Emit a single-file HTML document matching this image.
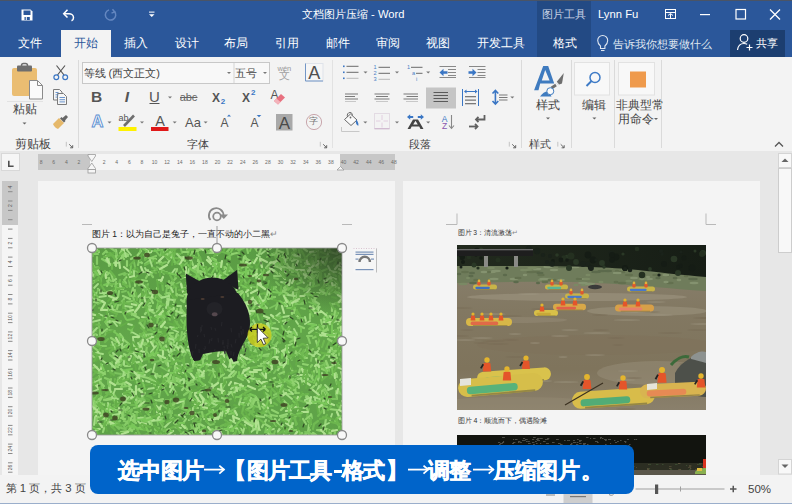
<!DOCTYPE html>
<html><head><meta charset="utf-8">
<style>
*{margin:0;padding:0;box-sizing:border-box}
html,body{width:792px;height:504px;overflow:hidden;background:#e7e7e7;font-family:"Liberation Sans",sans-serif}
.a{position:absolute}
.t{position:absolute;white-space:nowrap;line-height:1}
#title{left:0;top:0;width:792px;height:57px;background:#2b579a}
#topline{left:0;top:0;width:792px;height:1px;background:#4a5466}
#ctx{left:537px;top:1px;width:54px;height:56px;background:#234a84}
#share{left:730px;top:30px;width:55px;height:27px;background:#1c3e70}
.tab{color:#fff;font-size:11.5px;top:38px}
#seltab{left:61px;top:30px;width:50px;height:27px;background:#f3f3f3}
#ribbon{left:0;top:57px;width:792px;height:94px;background:#f3f3f3}
.sep{position:absolute;top:60px;width:1px;height:88px;background:#dadada}
.lbl{font-size:11px;color:#444;top:139px}
#doc{left:0;top:151px;width:792px;height:324px;background:#e7e7e7}
#status{left:0;top:475px;width:792px;height:28px;background:#f3f3f3}
#botline{left:0;top:503px;width:792px;height:1px;background:#9aaecb}
.page{position:absolute;top:181px;width:357px;height:294px;background:#f4f4f4}
#caption{left:90px;top:445px;width:544px;height:49px;background:#0064ca;border-radius:8px}
.cap{top:460px;color:#fff;font-size:22px;font-weight:bold;letter-spacing:-0.7px;-webkit-text-stroke:0.5px #fff}
</style></head><body>
<div id="title" class="a"></div>
<div id="topline" class="a"></div>
<div id="ctx" class="a"></div>
<div id="share" class="a"></div>
<div id="seltab" class="a"></div>
<div class="t" style="left:302px;top:9px;color:#fff;font-size:11.2px">文档图片压缩 - Word</div>
<div class="t" style="left:542px;top:9px;color:#c9d4e6;font-size:11px">图片工具</div>
<div class="t" style="left:598px;top:9px;color:#fff;font-size:11.3px">Lynn Fu</div>
<div class="t tab" style="left:18px">文件</div>
<div class="t tab" style="left:73.5px;color:#2b579a">开始</div>
<div class="t tab" style="left:124px">插入</div>
<div class="t tab" style="left:175px">设计</div>
<div class="t tab" style="left:224px">布局</div>
<div class="t tab" style="left:275px">引用</div>
<div class="t tab" style="left:326px">邮件</div>
<div class="t tab" style="left:375.5px">审阅</div>
<div class="t tab" style="left:426px">视图</div>
<div class="t tab" style="left:477px">开发工具</div>
<div class="t tab" style="left:553px">格式</div>
<div class="t" style="left:613px;top:38.5px;color:#dfe6f0;font-size:10.8px">告诉我你想要做什么</div>
<div class="t" style="left:755.5px;top:38px;color:#fff;font-size:11px">共享</div>

<div id="ribbon" class="a"></div>

<div class="sep" style="left:78px"></div>
<div class="sep" style="left:332px;background:#e2e2e2"></div>
<div class="sep" style="left:521px"></div>
<div class="sep" style="left:571px"></div>
<div class="sep" style="left:614px"></div>
<div class="sep" style="left:661px"></div>
<div class="t lbl" style="left:14.5px;font-size:11.5px;top:138.5px">剪贴板</div>
<div class="t lbl" style="left:187px">字体</div>
<div class="t lbl" style="left:409px">段落</div>
<div class="t lbl" style="left:529px">样式</div>


<svg class="a" style="left:0;top:0" width="792" height="504" viewBox="0 0 792 504">
<!-- ===== title bar icons ===== -->
<g fill="none" stroke="#fff" stroke-width="1.3">
 <path d="M21.5 9.5h9l2 2v9h-11z" fill="#fff" stroke="none"/>
 <rect x="23.5" y="10.5" width="7" height="4.5" fill="#2b579a" stroke="none"/>
 <rect x="24.5" y="17" width="1.3" height="3" fill="#2b579a" stroke="none"/>
 <rect x="26.8" y="17" width="3" height="3" fill="#2b579a" stroke="none"/>
 <path d="M67.5 9.8l-3.8 3.9l3.8 3.9" stroke-width="1.5"/><path d="M64 13.7h5c2.5 0 4.5 1.8 4.5 4c0 1.5-0.8 2.6-2 3.1" stroke-width="1.5"/>
</g>
<g fill="none" stroke="#6487c0" stroke-width="1.5">
 <path d="M114.5 11.5a5.2 5.2 0 1 1 -5.5 -1.6"/><path d="M112.5 9.3l2.2 2.6l-3.2 1.2"/>
</g>
<path d="M149 14.3h5.5l-2.75 2.8z" fill="#fff"/>
<rect x="149" y="11.6" width="5.5" height="1" fill="#fff"/>
<!-- ribbon display options -->
<g fill="none" stroke="#fff" stroke-width="1">
 <rect x="665.5" y="9.5" width="10" height="9"/>
 <path d="M665.5 12.5h10M670.5 14v4M668 15.5l2.5-2l2.5 2"/>
</g>
<rect x="700" y="14" width="10" height="1.2" fill="#fff"/>
<rect x="736" y="9.5" width="9.5" height="9.5" fill="none" stroke="#fff" stroke-width="1.2"/>
<path d="M770 9.5l10 10M780 9.5l-10 10" stroke="#fff" stroke-width="1.3"/>
<!-- lightbulb -->
<g fill="none" stroke="#dfe6f0" stroke-width="1.1">
 <path d="M600.5 46c-2-1.8-2.8-3.5-2.8-5.5a5 5 0 0 1 10 0c0 2-0.8 3.7-2.8 5.5v2.5h-4.4z"/>
 <path d="M601 50.5h3.5"/>
</g>
<!-- share person -->
<g fill="none" stroke="#fff" stroke-width="1.2">
 <circle cx="744" cy="38.5" r="3.8"/>
 <path d="M737.5 50c0.5-4 3-6.5 6.5-6.5c1.2 0 2.3 0.3 3.2 0.8"/>
 <path d="M749.5 44.5v6M746.5 47.5h6"/>
</g>

<!-- ===== clipboard group ===== -->
<rect x="12" y="68" width="25" height="28" rx="2" fill="#eabd72"/>
<rect x="17" y="65.5" width="15" height="6" rx="1" fill="#6e6e6e"/>
<rect x="21.5" y="63.5" width="6" height="4" rx="2" fill="none" stroke="#6e6e6e" stroke-width="1.5"/>
<path d="M29.5 80.5h8l5 5v13.5h-13z" fill="#fafafa" stroke="#8a8a8a" stroke-width="1"/>
<path d="M37.5 80.5v5h5" fill="none" stroke="#8a8a8a" stroke-width="1"/>
<rect x="7" y="101" width="36" height="1" fill="#e2e2e2"/>
<path d="M22.5 122.5h4l-2 2z" fill="#666"/>
<!-- scissors -->
<g fill="none" stroke-width="1.2">
 <path d="M56.5 65.5l7.5 9.5M65 65.5l-7.5 9.5" stroke="#555"/>
 <circle cx="56.3" cy="77.3" r="2.4" stroke="#3a76c4"/>
 <circle cx="65.2" cy="77.3" r="2.4" stroke="#3a76c4"/>
</g>
<!-- copy -->
<g stroke="#7a7a7a" stroke-width="1" fill="#f6f6f6">
 <path d="M53.5 89.5h6l2.5 2.5v8h-8.5z"/>
 <path d="M57.5 93.5h6l3 3v8h-9z"/>
</g>
<g stroke="#5b8ac8" stroke-width="0.9">
 <path d="M55.5 92.5h3M55.5 94.8h3M55.5 97.1h2"/>
 <path d="M59.5 97.5h5.5M59.5 99.7h5.5M59.5 101.9h5.5"/>
</g>
<!-- format painter -->
<path d="M53 124l6-6l5 5l-6 6c-2-0.5-4-2.5-5-5z" fill="#e5b86a"/>
<path d="M60 118.5l1.5-1.5l4 4l-1.5 1.5zM62.5 118l3.5-3l2 2l-3 3.5z" fill="#666"/>

<!-- ===== font group ===== -->
<rect x="82.5" y="62.5" width="187" height="21" fill="#f8f8f8" stroke="#c8c8c8"/>
<rect x="233.5" y="63" width="1" height="20" fill="#d4d4d4"/>
<path d="M227 72h4l-2 2z" fill="#777"/>
<path d="M263 72h4l-2 2z" fill="#777"/>
<!-- boxed A -->
<rect x="305.5" y="63.5" width="17.5" height="17.5" fill="#f6f6f6" stroke="#dfe3ea" stroke-width="1"/><path d="M305.5 63.5v17.5h17.5" fill="none" stroke="#7396c6" stroke-width="1"/>
<text x="314.2" y="79" font-family="Liberation Sans" font-size="18" fill="#505050" text-anchor="middle">A</text>
<!-- B I U abc -->
<text x="96.5" y="102" font-family="Liberation Sans" font-size="15.5" font-weight="bold" fill="#555" text-anchor="middle">B</text>
<text x="127" y="102" font-family="Liberation Sans" font-size="15.5" font-weight="bold" font-style="italic" fill="#555" text-anchor="middle">I</text>
<text x="154.5" y="101.5" font-family="Liberation Sans" font-size="15" fill="#555" text-anchor="middle">U</text>
<rect x="149.5" y="103" width="10" height="1" fill="#555"/>
<path d="M168 96.5h4l-2 2z" fill="#777"/>
<text x="188.5" y="100.5" font-family="Liberation Sans" font-size="11" fill="#666" text-anchor="middle">abc</text>
<rect x="180" y="97" width="17.5" height="1" fill="#666"/>
<!-- subscript/superscript -->
<text x="216" y="101.8" font-family="Liberation Sans" font-size="12" font-weight="bold" fill="#555" text-anchor="middle">X</text>
<text x="223" y="103.5" font-family="Liberation Sans" font-size="8" font-weight="bold" fill="#3a76c4" text-anchor="middle">2</text>
<text x="246" y="101.8" font-family="Liberation Sans" font-size="12" font-weight="bold" fill="#555" text-anchor="middle">X</text>
<text x="253.2" y="94.5" font-family="Liberation Sans" font-size="8" font-weight="bold" fill="#3a76c4" text-anchor="middle">2</text>
<!-- clear formatting -->
<text x="274.5" y="98.7" font-family="Liberation Sans" font-size="12" fill="#555" text-anchor="middle">A</text>
<path d="M274 101l7-7l4 3.5l-7 7z" fill="#e8707f"/>
<path d="M274 101l2.5-2.5l4 3.5l-2.5 2.5z" fill="#f3b3bb"/>
<!-- row3: text effects A -->
<text x="97.4" y="127.3" font-family="Liberation Sans" font-size="16.5" font-weight="bold" fill="#fbfbfb" stroke="#5a8fd2" stroke-width="0.9" text-anchor="middle">A</text>
<path d="M107.5 121.5h4l-2 2z" fill="#777"/>
<!-- highlighter -->
<text x="118.5" y="121" font-family="Liberation Sans" font-size="9" fill="#555">ab</text>
<path d="M124 126l10-10.5" stroke="#6e6e6e" stroke-width="2.6"/>
<rect x="118.5" y="127" width="18" height="4" fill="#fff200"/>
<path d="M140 121.5h4l-2 2z" fill="#777"/>
<!-- font color -->
<text x="160" y="126.3" font-family="Liberation Sans" font-size="14.5" fill="#555" text-anchor="middle">A</text>
<rect x="151" y="127" width="17.5" height="4" fill="#e01818"/>
<path d="M172.7 121.5h4l-2 2z" fill="#777"/>
<!-- Aa -->
<text x="193" y="127.1" font-family="Liberation Sans" font-size="13" fill="#555" text-anchor="middle">Aa</text>
<path d="M203.6 121.5h4l-2 2z" fill="#777"/>
<!-- grow/shrink -->
<text x="224.5" y="127.2" font-family="Liberation Sans" font-size="12" fill="#555" text-anchor="middle">A</text>
<path d="M227 116.5l2-2l2 2z" fill="#3a76c4"/>
<text x="254.5" y="127.2" font-family="Liberation Sans" font-size="12" fill="#555" text-anchor="middle">A</text>
<path d="M256.7 115l2.3 2.3l2.3-2.3z" fill="#3a76c4"/>
<!-- shaded A -->
<rect x="276" y="114" width="16.5" height="16.5" fill="#a9a9a9"/>
<text x="284.3" y="128.6" font-family="Liberation Sans" font-size="17" fill="#4a4a4a" text-anchor="middle">A</text>
<!-- enclosed char -->
<circle cx="314" cy="122" r="7.6" fill="none" stroke="#c9a7ad" stroke-width="1"/>

<!-- ===== paragraph group ===== -->
<g fill="#3a76c4">
 <rect x="343" y="65.5" width="1.6" height="1.6"/><rect x="343" y="71.5" width="1.6" height="1.6"/><rect x="343" y="77.5" width="1.6" height="1.6"/>
</g>
<g fill="#6a6a6a">
 <rect x="346.5" y="65.8" width="12" height="1"/><rect x="346.5" y="71.8" width="12" height="1"/>
</g>
<rect x="346.5" y="77.8" width="12" height="1" fill="#b8b8b8"/>
<path d="M363.5 71.5h4l-2 2z" fill="#777"/>
<g font-family="Liberation Sans" font-size="5.6" fill="#4a7fc4">
 <text x="373.5" y="68.5">1</text><text x="373.5" y="74.5">2</text><text x="373.5" y="80.5">3</text>
 <text x="407" y="68.5">1</text><text x="412" y="74.5">a</text><text x="416" y="80.5">i</text>
</g>
<g fill="#6a6a6a">
 <rect x="378.5" y="66.8" width="11.5" height="1"/><rect x="378.5" y="72.8" width="11.5" height="1"/>
 <rect x="411" y="66.8" width="11.5" height="1"/><rect x="416" y="72.8" width="6.5" height="1"/>
</g>
<rect x="378.5" y="78.8" width="11.5" height="1" fill="#b8b8b8"/>
<path d="M395 71.5h4l-2 2z" fill="#777"/>
<path d="M426.2 71.5h4l-2 2z" fill="#777"/>
<!-- indent -->
<g fill="#888">
 <rect x="439.5" y="66" width="16.5" height="1"/><rect x="448" y="69" width="8" height="1"/><rect x="448" y="72" width="8" height="1"/><rect x="448" y="75" width="8" height="1"/><rect x="439.5" y="77" width="16.5" height="1"/>
 <rect x="469" y="66" width="16.5" height="1"/><rect x="477.5" y="69" width="8" height="1"/><rect x="477.5" y="72" width="8" height="1"/><rect x="477.5" y="75" width="8" height="1"/><rect x="469" y="77" width="16.5" height="1"/>
</g>
<path d="M439.5 72.5l4-3.8v2.6h4v2.4h-4v2.6z" fill="#3a76c4"/>
<path d="M476.5 72.5l-4-3.8v2.6h-4v2.4h4v2.6z" fill="#3a76c4"/>
<!-- align -->
<g fill="#7a7a7a">
 <rect x="345" y="93.5" width="13" height="1"/><rect x="345" y="96" width="10" height="1"/><rect x="345" y="98.5" width="13" height="1"/>
 <rect x="374.5" y="93.5" width="15" height="1"/><rect x="376" y="96" width="12" height="1"/><rect x="374.5" y="98.5" width="15" height="1"/>
 <rect x="403.5" y="93.5" width="14.5" height="1"/><rect x="406.5" y="96" width="11.5" height="1"/><rect x="403.5" y="98.5" width="14.5" height="1"/>
</g>
<g fill="#c8c8c8">
 <rect x="345" y="101" width="11" height="1"/><rect x="376" y="101" width="12" height="1"/><rect x="406" y="101" width="12" height="1"/>
</g>
<rect x="426" y="87.5" width="30" height="21" fill="#c5c5c5"/>
<g fill="#5a5a5a">
 <rect x="433.5" y="92" width="14.5" height="1"/><rect x="433.5" y="95" width="14.5" height="1"/><rect x="433.5" y="98" width="14.5" height="1"/><rect x="433.5" y="101" width="14.5" height="1"/>
</g>
<!-- distributed -->
<g fill="#3a76c4">
 <rect x="462" y="89" width="1" height="17"/><rect x="478" y="89" width="1" height="17"/>
 <path d="M464 91.5l2.5-2v1.5h8.5v-1.5l2.5 2l-2.5 2v-1.5h-8.5v1.5z"/>
</g>
<g fill="#7a7a7a">
 <rect x="465" y="96" width="11" height="1.3"/><rect x="465" y="99.5" width="11" height="1.3"/><rect x="465" y="103" width="11" height="1.3"/>
</g>
<!-- line spacing -->
<g fill="none" stroke="#3a76c4" stroke-width="1.6">
 <path d="M495.4 91v12.5M492.5 93.5l2.9-3l2.9 3M492.5 101l2.9 3l2.9-3"/>
</g>
<g fill="#7a7a7a">
 <rect x="499" y="94.5" width="8.5" height="1"/><rect x="499" y="97" width="8.5" height="1"/><rect x="499" y="99.5" width="8.5" height="1"/>
</g>
<path d="M510.3 96.5h4l-2 2z" fill="#777"/>
<!-- shading -->
<path d="M344.5 119.5l6-5.5l6.5 6l-6 5.5z" fill="#fafafa" stroke="#6a6a6a" stroke-width="1"/>
<path d="M347.5 117c-0.8-2.5 0.5-4.5 2.5-4.5c1.5 0 2.5 1.2 2.5 3" fill="none" stroke="#6a6a6a" stroke-width="1"/>
<circle cx="350.5" cy="117.5" r="0.9" fill="#6a6a6a"/>
<path d="M356 119.5c1.8 1.5 2.6 3.5 2.4 6.3c-1.5-0.3-2.4-1.8-2.5-3.5z" fill="#3a76c4"/>
<path d="M341.5 127v4.5h18" fill="none" stroke="#c8c8c8" stroke-width="1"/>
<path d="M363.3 121.5h4l-2 2z" fill="#777"/>
<!-- borders -->
<rect x="374.5" y="113.5" width="15" height="15" fill="none" stroke="#e3dbe3" stroke-width="1"/>
<path d="M382 115v5M382 122.5v5M376 121h4.5M383.5 121h4.5" stroke="#e2cfe0" stroke-width="1"/>
<rect x="374.5" y="128.3" width="15" height="1" fill="#c9b0c9"/>
<path d="M395 121.5h4l-2 2z" fill="#777"/>
<!-- chinese layout -->
<g fill="#3a76c4">
 <path d="M407 117l3.2-2.8v1.8h3v2h-3v1.8z"/>
 <path d="M424 117l-3.2-2.8v1.8h-3v2h3v1.8z"/>
</g>
<path d="M407.5 129l5.5-9.5h5l5.5 9.5h-3l-1.3-2.5h-7.5l-1.3 2.5zM413.2 124.5h4.6l-2.3-3.8z" fill="#444"/>
<path d="M426.2 121.5h4l-2 2z" fill="#777"/>
<!-- sort -->
<text x="444.5" y="121.5" font-family="Liberation Sans" font-size="8.5" fill="#3a76c4" text-anchor="middle">A</text>
<text x="444.5" y="129" font-family="Liberation Sans" font-size="8.5" fill="#8a58b0" text-anchor="middle">Z</text>
<path d="M451.5 115v13M449 125.5l2.5 3l2.5-3" fill="none" stroke="#888" stroke-width="1.1"/>
<!-- show marks -->
<g fill="none" stroke="#606060" stroke-width="1.8">
 <path d="M484.5 115v4.5h-8"/><path d="M478.5 117l-2.5 2.5l2.5 2.5"/>
 <path d="M469 126.5h8"/><path d="M475 124l2.5 2.5l-2.5 2.5"/>
</g>

<!-- ===== styles group ===== -->
<path d="M543.2 66h5l6 17.6h-14l-1.7 6.7h-4.4zM545.2 70.1l4.4 10.4h-7.8z" fill="#3f7bbf" fill-rule="evenodd"/>
<path d="M556.8 81.8l7-8.7l-1.8 10.3l-2.8 1.2z" fill="#6e6e6e"/>
<path d="M556.5 83.5l2.3 1.5" stroke="#d8d8d8" stroke-width="1"/>
<path d="M556 85l-4.5 3" stroke="#6e6e6e" stroke-width="2.8"/>
<path d="M540 96.5c2.5-3.5 5.5-5.5 9-5l2.5 5z" fill="#3f7bbf"/>
<circle cx="550.3" cy="91.2" r="3.5" fill="#fafafa" stroke="#3f7bbf" stroke-width="1"/>
<path d="M546 117.5h4l-2 2z" fill="#666"/>





<!-- editing -->
<rect x="574.5" y="62.5" width="35" height="32.5" fill="#f8f8f8" stroke="#e2e2e2"/>
<circle cx="595" cy="77.5" r="5" fill="none" stroke="#3f7bc6" stroke-width="1.5"/>
<path d="M591.5 81l-5 5" stroke="#3f7bc6" stroke-width="2"/>
<path d="M592.4 117.5h4l-2 2z" fill="#666"/>
<!-- non-typical -->
<rect x="618.5" y="62.5" width="36" height="32.5" fill="#f8f8f8" stroke="#e2e2e2"/>
<rect x="630" y="71.5" width="16" height="16" fill="#ef9a4c"/>
<path d="M654 118h4l-2 2z" fill="#666"/>
<path d="M66.3 141.8v4.8" stroke="#c4c4c4" stroke-width="1"/><path d="M69.2 144.3l3.3 3.3M72.7 145.2v2.6h-2.6" fill="none" stroke="#555" stroke-width="0.9"/><path d="M320.3 141.8v4.8" stroke="#c4c4c4" stroke-width="1"/><path d="M323.2 144.3l3.3 3.3M326.7 145.2v2.6h-2.6" fill="none" stroke="#555" stroke-width="0.9"/><path d="M509.3 141.8v4.8" stroke="#c4c4c4" stroke-width="1"/><path d="M512.2 144.3l3.3 3.3M515.7 145.2v2.6h-2.6" fill="none" stroke="#555" stroke-width="0.9"/><path d="M557.8 141.8v4.8" stroke="#c4c4c4" stroke-width="1"/><path d="M560.6999999999999 144.3l3.3 3.3M564.1999999999999 145.2v2.6h-2.6" fill="none" stroke="#555" stroke-width="0.9"/>
<!-- collapse caret -->
<path d="M775 146.5l4-4l4 4" fill="none" stroke="#555" stroke-width="1.3"/>
</svg>


<div class="t" style="left:12.5px;top:104px;color:#444;font-size:11.5px">粘贴</div>
<div class="t" style="left:83.5px;top:67.5px;color:#444;font-size:11px">等线 (西文正文)</div>
<div class="t" style="left:235px;top:67.5px;color:#444;font-size:11px">五号</div>
<div class="t" style="left:277.5px;top:64.5px;color:#999;font-size:7.5px">wén</div>
<div class="t" style="left:278.5px;top:70px;color:#a0a0a0;font-size:11px">文</div>
<div class="t" style="left:309px;top:117px;color:#777;font-size:9px">字</div>
<div class="t" style="left:536px;top:99px;color:#444;font-size:12px">样式</div>
<div class="t" style="left:582px;top:99px;color:#444;font-size:12px">编辑</div>
<div class="t" style="left:616px;top:99px;color:#444;font-size:12px">非典型常</div>
<div class="t" style="left:618px;top:113px;color:#444;font-size:12px">用命令</div>

<div id="doc" class="a"></div>
<div class="page" style="left:38px"></div>
<div class="page" style="left:403px"></div>


<!--PAGESTART-->
<svg class="a" style="left:0;top:181px" width="792" height="294" viewBox="0 181 792 294">
 <g stroke="#b9b9b9" stroke-width="1" fill="none">
  <path d="M82 224.5h10M342 224.5h10"/>
  <path d="M446 224.5h11v-11M716 224.5h-10v-11"/>
 </g>
</svg>
<div class="t" style="left:92px;top:229.5px;color:#222;font-size:8.5px">图片 1：以为自己是兔子，一直不动的小二黑<span style="color:#888">↵</span></div>
<div class="t" style="left:457.5px;top:230px;color:#333;font-size:6.7px">图片 3：清流激荡<span style="color:#888">↵</span></div>
<div class="t" style="left:457.5px;top:417px;color:#333;font-size:7px">图片 4：顺流而下，偶遇险滩</div>
<svg class="a" style="left:92px;top:248px" width="250" height="187" viewBox="0 0 250 187">
<defs><radialGradient id="gdark" cx="1" cy="0" r="0.35"><stop offset="0" stop-color="#2a3a22" stop-opacity="0.85"/><stop offset="1" stop-color="#2a3a22" stop-opacity="0"/></radialGradient>
<linearGradient id="gb" x1="0" y1="0" x2="0" y2="1"><stop offset="0" stop-color="#5a9c44"/><stop offset="0.5" stop-color="#62a64a"/><stop offset="1" stop-color="#5ea248"/></linearGradient></defs>
<rect width="250" height="187" fill="url(#gb)"/>
<path d="M1 85l4 2M98 72l-2 4M85 86l-3 8M62 152l8 1M35 97l-5 3M53 170l6 0M76 66l6 4M237 161l8 1M123 31l1 4M231 152l0 4M221 82l-4 3M18 135l-0 7M192 168l-5 4M153 10l7 4M28 117l-4 0M190 17l4 8M65 40l0 4M105 181l-2 4M24 2l1 8M24 31l-3 2M162 175l-1 4M164 168l8 1M171 58l4 2M196 133l5 7M169 85l3 3M191 152l6 6M81 189l5 0M107 24l4 4M179 14l-5 6M32 106l6 4M36 183l-7 1M65 126l-1 5M155 42l1 6M89 96l-3 6M245 36l-5 2M251 118l1 4M23 159l-5 5M144 115l-5 6M214 147l4 4M165 20l-1 8M95 136l-5 6M174 -3l2 8M139 129l-7 1M3 186l0 6M68 92l3 3M85 21l-1 4M160 173l2 4M161 72l3 6M254 73l-8 3M38 118l-5 0M239 23l5 1M250 54l3 1M221 185l3 2M-3 47l7 5M99 104l5 0M195 166l-7 2M38 124l-4 1M192 19l4 1M24 10l-1 7M177 78l-6 0M220 23l-0 5M142 54l6 2M188 17l1 4M53 40l-0 7M174 48l-1 4M200 62l-0 4M37 138l2 4M48 128l8 2M15 81l-5 4M130 110l-4 2M191 177l-5 6M74 4l2 4M131 43l2 5M0 153l8 2M-4 104l6 5M6 41l6 5M166 172l-6 4M214 149l4 5M77 46l0 4M25 185l5 3M159 150l-3 7M229 188l2 4M105 180l-4 3M160 86l-6 4M28 38l3 3M227 109l-1 5M16 -4l-3 4M59 44l-1 6M106 13l5 2M110 54l-3 4M217 177l-1 8M91 9l-4 1M237 103l-2 4M183 49l-7 2M163 83l-1 8M242 115l-2 4M136 122l4 2M245 4l3 1M41 166l-3 7M156 123l5 3M253 35l-2 6M219 186l-5 3M216 44l1 6M174 172l-4 7M245 127l-5 0M125 79l8 1M137 77l6 0M123 5l-8 0M253 137l-6 4M102 159l4 1M31 7l-3 5M182 17l-3 5M31 -1l-2 5M248 186l5 3M183 18l5 2M55 107l3 5M204 45l0 7M208 121l-1 4M94 171l-2 3M67 108l4 6M208 -2l7 5M21 68l-8 1M179 97l5 1M95 142l5 2M31 48l7 3M93 -4l3 7M112 36l-1 4M109 32l-3 4M202 8l6 1M7 164l4 5M5 51l6 3M45 104l-7 1M130 150l3 1M16 66l-1 8M229 72l1 4M174 119l5 3M204 67l6 5M197 79l-1 6M84 130l8 2M102 178l1 3M127 184l-2 6M200 96l-6 2M59 51l2 4M173 167l6 2M71 49l-4 0M227 86l-3 2M164 152l-7 2M171 52l0 7M53 38l2 3M240 56l-0 7M78 134l7 3M2 54l4 1M99 103l6 5M113 109l-4 5M247 -1l4 7M190 115l-4 7M77 45l-1 8M149 187l-7 2M2 155l0 7M195 98l-3 6M202 45l0 7M151 172l8 3M31 133l3 5M0 20l-4 6M23 62l-5 0M43 32l-0 6M244 107l-1 5M229 14l4 2M121 87l2 7M94 58l8 2M49 97l1 4M14 177l-4 1M131 55l-5 7M182 28l6 0M250 144l-6 2M4 181l4 0M147 180l4 3M33 154l5 1M194 133l-7 2M70 167l-1 7M226 182l6 0M231 143l2 4M29 121l4 4M225 45l6 0M201 132l4 2M149 136l-1 4M49 3l-4 5M106 122l1 3M99 12l2 5M152 9l-1 6M248 8l-6 3M120 -4l6 5M81 140l3 5M136 57l-7 1M220 16l6 3M108 82l2 5M221 52l6 4M183 130l-5 2M136 54l-2 5M215 110l-6 0M173 176l5 3M226 23l-4 1M241 30l3 4M159 81l6 4M188 132l5 1M69 78l6 2M226 58l-2 3M239 100l3 5M48 152l-3 3M62 133l1 6M205 105l6 3M37 160l-4 2M58 90l3 3M104 18l-2 5M238 4l7 2M224 93l3 8M120 2l-5 2M78 181l-4 1M115 90l5 3M99 110l6 1M213 130l-7 1M6 26l-6 1M30 3l6 4M107 92l2 8M23 42l-8 2M207 10l-7 3M244 125l1 4M130 186l-7 2M227 129l-3 8M170 -1l-3 7M125 82l7 1M151 44l-3 3M45 166l-3 6M32 160l-5 4M134 23l-6 5M103 131l-6 3M234 170l-1 8M179 -4l0 4M56 47l5 3M97 102l5 7M161 181l7 1M241 100l3 4M128 15l4 6M143 74l4 4M146 109l-5 1M56 61l6 4M194 72l-7 2M101 96l4 4M235 116l-1 5M12 168l5 5M214 187l-4 1M71 128l-4 0M232 180l7 3M201 56l0 7M150 54l-4 7M183 171l4 6M124 152l1 5M37 173l0 8M222 138l-3 3M32 8l4 0M121 162l1 4M166 180l-1 5M157 94l-6 5M249 82l-2 6M216 169l2 4M171 56l4 4M110 183l1 7M125 72l-8 3M98 163l5 4M108 176l5 3M231 157l1 8M240 106l5 4M13 177l-2 7M43 98l5 2M120 28l3 4M58 159l0 5M255 182l-5 2M40 66l7 4M80 99l-1 4M56 62l-3 4M22 151l-8 1" stroke="#96d676" stroke-width="2.2" stroke-linecap="round" fill="none"/>
<path d="M18 107l6 5M21 107l4 1M38 59l2 8M248 86l6 2M232 141l-2 4M116 122l7 2M140 -2l-5 6M68 143l-1 6M212 21l1 4M167 78l3 4M64 21l-4 4M175 69l4 5M28 173l-4 2M37 172l-4 5M59 121l-5 3M156 20l0 6M64 8l-5 2M87 79l5 1M102 41l-3 5M32 32l2 3M209 186l5 2M96 144l-4 3M203 145l4 0M15 33l5 5M221 187l5 1M106 114l-5 5M77 33l-1 7M246 82l-3 5M63 185l3 6M163 -0l2 3M6 32l-4 1M250 53l-8 3M2 23l7 1M22 36l4 0M206 118l5 2M155 0l1 5M83 131l5 4M84 30l-6 6M198 137l5 3M228 59l-3 2M14 158l6 2M6 6l-7 0M224 118l6 0M3 -2l-6 4M201 85l-3 2M77 93l4 3M79 1l-2 5M143 165l-6 1M220 117l-5 6M219 166l1 4M69 85l-5 4M194 132l7 3M36 159l-2 5M75 129l2 3M75 109l0 8M101 134l-3 1M164 104l2 5M173 145l4 3M63 181l2 4M19 131l-2 8M230 158l5 1M135 16l5 6M221 101l-5 5M136 182l0 4M7 128l1 8M81 170l-3 3M6 92l1 5M180 6l8 2M55 98l-1 7M69 58l-4 2M106 176l-5 4M51 35l-4 2M32 173l4 1M109 127l-3 2M166 34l-1 7M71 61l0 7M49 49l-1 5M86 87l2 5M199 53l-1 4M201 131l-3 3M77 182l-6 1M112 151l2 4M92 184l-3 2M74 102l-6 0M100 134l-5 3M78 113l-5 0M224 14l-6 3M237 27l-3 3M53 39l-2 3M195 -0l1 6M205 182l-5 0M197 87l7 3M1 35l-5 2M182 84l-3 7M120 87l-6 6M45 151l-0 4M130 181l-5 2M3 153l1 7M82 35l-4 3M93 121l5 4M90 84l-1 8M160 14l-4 3M244 132l1 4M120 59l-8 1M89 159l6 3M184 39l-6 4M218 127l3 5M32 159l-1 8M5 169l-1 7M40 142l3 5M186 53l-2 8M222 186l2 5M35 28l-2 3M74 38l5 2M81 129l0 4M164 56l-4 6M41 189l-5 0M158 96l1 8M176 108l4 3M51 94l-4 2M202 19l-1 5M58 25l3 4M176 79l4 1M171 108l8 1M215 101l-4 3M251 143l-7 1M73 164l7 1M164 97l3 4M74 97l-5 5M146 129l5 3M40 53l-5 1M105 125l7 5M101 174l3 5M116 106l-1 5M227 81l7 2M161 151l-2 6M242 74l-6 3M148 53l-2 4M244 143l1 8M224 85l5 3M216 89l2 6M102 179l-1 6M245 144l6 3M224 27l-3 3M119 75l-4 3M44 133l2 3M125 95l-8 1M21 145l4 6M175 78l-8 1M51 -2l3 4M72 112l3 5M186 94l-5 6M116 161l-5 0M99 144l-1 7M32 51l-4 6M114 23l-4 2M89 188l7 1M13 130l5 2M234 119l3 3M13 124l-2 3M72 168l-3 2M228 153l1 3M195 88l7 2M226 18l-1 6M232 78l-4 4M57 49l-6 0M194 133l7 3M126 180l1 8M69 185l-1 3M10 11l7 4M14 29l5 4M23 39l7 2M58 12l-5 4M130 86l-6 6M50 158l-8 2M57 25l-3 5M106 95l6 1M67 94l2 4M247 99l-0 8M236 68l6 2M219 51l4 5M49 119l3 5M5 9l0 7M222 186l-5 1M8 82l0 5M233 141l3 6M43 144l2 6M77 92l1 4M120 181l7 4M26 136l5 0M68 139l-6 6M79 133l-7 3M216 151l5 3M218 182l-6 5M44 185l-0 7M69 65l3 6M170 25l2 4M50 173l7 1M194 50l-1 8M43 42l-1 4M53 161l-4 0M53 95l3 2M64 88l-3 7M71 4l5 7M54 103l5 7M203 91l-5 3M201 5l5 4M112 74l-2 7M150 139l5 4M139 53l6 0M41 48l1 4M198 -5l4 7M181 132l2 7M78 161l1 7M77 61l4 2M124 65l-1 4M221 13l-8 2M217 40l-4 2M243 184l-1 6M138 175l3 8M47 13l-1 4M164 63l-5 3M120 153l-5 7M14 75l3 4M188 144l-6 3M16 -2l7 5M170 118l-4 0M181 15l7 3M17 57l-2 7M219 29l3 7M28 130l-5 5M237 188l-6 1M110 164l1 5M103 20l4 5M219 12l1 4M70 165l-5 2M48 164l-5 0M94 133l4 4M14 3l3 4M149 14l6 3M70 2l-1 5M94 40l-4 0M2 18l-5 5M110 104l3 5M50 150l-2 8M106 150l-1 7M115 36l4 1M118 39l-6 0M248 170l5 6M86 171l-3 2M129 70l1 4M121 57l6 0M183 49l-6 1M246 65l-4 7M23 96l-0 5M213 109l-2 4M94 24l6 4M108 74l-1 6M31 108l-4 3M183 75l-6 1M62 134l1 5M100 5l-2 4M148 98l3 3M162 90l3 6M14 3l-3 3M174 98l5 2M65 43l2 4M96 185l-5 3M35 138l-6 1M220 88l-5 0M226 48l-4 4M216 173l3 3M49 179l-4 2M135 159l2 3M142 144l-5 0M97 137l-3 4M-4 91l3 5M120 114l-4 4M242 39l-6 3M68 112l8 1M78 -2l-0 7M134 134l-3 2M177 97l0 4M244 -2l6 4M175 20l5 3M105 64l-3 7M45 101l3 5M124 179l4 1M225 88l-4 2M24 34l-1 8M42 181l-5 2M112 -0l-8 2M5 119l-5 1M161 158l-7 4M108 109l-3 3M42 114l5 1M14 98l-7 0M230 40l1 6M36 175l3 4M134 134l-4 7M38 99l-2 4M251 94l-3 3M173 113l-1 8M168 93l-5 6M76 161l0 4M85 61l-1 6M236 31l4 1M137 41l5 1" stroke="#86cc66" stroke-width="2.2" stroke-linecap="round" fill="none"/>
<path d="M147 4l-1 5M70 23l2 3M114 173l4 4M-1 156l3 3M230 144l0 7M114 140l3 2M33 25l-6 2M228 24l-3 6M103 89l-7 4M63 2l5 6M158 97l1 4M75 39l-1 6M182 90l-2 5M182 186l4 7M101 186l7 4M184 34l3 3M96 71l2 8M20 114l-0 5M119 150l7 5M236 68l-3 7M119 81l-6 4M17 82l6 1M33 167l-4 3M42 177l-7 2M129 98l3 5M41 78l-2 7M71 131l7 4M37 123l4 2M174 90l1 7M4 160l-3 5M65 67l1 5M89 24l-6 5M118 169l5 5M222 11l-2 3M112 -3l-2 5M3 134l-3 3M235 65l-4 6M169 22l3 7M75 24l-8 0M95 15l-5 4M54 4l-1 7M107 28l-8 1M246 -3l4 7M109 171l-1 4M72 186l-4 3M198 158l1 6M142 161l-0 8M4 124l5 2M72 72l-6 5M183 134l4 0M128 126l-2 4M85 152l-5 4M213 52l-2 4M150 117l3 3M128 76l1 5M216 37l-4 6M145 159l-6 4M49 169l6 1M113 187l3 2M161 66l-4 3M130 170l-8 0M99 142l-2 8M180 172l4 6M154 19l5 4M67 113l-7 2M8 144l1 6M30 53l3 5M27 89l1 4M213 184l5 1M89 35l2 4M251 29l1 4M166 174l-4 5M10 162l-1 4M168 126l4 3M180 81l-5 2M163 130l4 2M7 94l-2 4M105 157l-3 3M73 46l3 3M124 98l0 4M5 147l-0 4M29 128l-3 2M80 163l-2 7M251 136l-4 6M146 181l3 7M102 92l-5 2M136 97l-7 2M187 147l-6 3M201 84l4 1M232 117l5 6M180 186l1 4M42 14l1 5M95 28l-6 3M139 89l0 6M23 177l4 4M34 43l-4 1M246 170l-3 3M115 62l-7 1M79 151l-4 6M6 19l-8 1M194 42l-7 5M89 158l-7 3M234 34l3 4M244 188l-5 4M81 144l4 3M4 33l-3 2M236 102l8 2M102 117l6 4M59 182l-5 7M127 131l-1 3M41 22l7 3M37 126l2 6M92 100l-2 7M82 14l5 2M125 49l-1 5M122 176l-4 1M253 186l-3 6M114 90l-3 8M200 40l5 2M122 66l0 5M67 172l4 7M142 140l1 5M110 154l-1 7M22 173l-2 6M62 90l4 2M224 80l-7 1M97 105l5 3M207 129l-5 3M119 103l-5 7M207 44l-7 2M254 80l-3 7M146 17l-0 8M124 158l-4 1M151 29l3 6M8 91l-3 5M182 30l4 1M197 129l-3 4M192 141l6 2M29 187l6 4M53 168l-1 4M65 170l1 7M210 56l-8 0M124 30l7 3M162 158l4 1M207 10l2 4M152 52l-4 6M74 14l-6 2M209 60l4 1M53 104l4 4M198 20l3 3M215 21l2 4M220 170l-3 3M58 69l-3 2M40 162l-2 4M144 102l-5 7M208 54l6 1M88 160l7 3M219 44l-6 2M75 58l5 3M240 42l5 4M43 107l0 5M31 63l7 2M67 180l-3 5M176 168l6 5M40 161l-4 3M209 101l-4 6M42 53l6 5M236 4l-1 7M241 36l3 2M16 132l0 4M37 169l0 7M232 116l-3 2M130 97l0 8M48 86l3 3M197 106l3 6M52 150l2 5M188 68l-7 2M137 5l1 5M153 119l6 5M200 61l4 1M42 150l-6 2M121 15l8 1M141 6l-5 3M8 146l-5 4M101 179l-3 4M251 188l-5 1M135 22l6 1M184 57l-6 3M31 177l3 4M6 42l-2 5M68 51l2 6M39 104l-5 5M108 89l-3 4M94 118l-3 5M92 155l-3 2M227 158l-0 6M93 45l3 2M184 122l-2 3M26 179l7 2M217 173l1 4M49 115l-2 6M106 75l1 6M78 46l7 3M175 164l-6 1M118 2l-2 3M177 173l5 1M134 45l3 7M22 51l-4 6M101 22l6 4M190 80l5 3M158 38l5 1M139 151l-6 2M69 119l7 4M170 54l-5 2M203 50l-3 4M126 96l-5 1M7 75l-0 5M180 84l4 4M52 137l-2 7M96 102l-4 6M209 119l1 3M103 136l-5 1M33 60l4 6M182 39l4 5M250 187l-2 3M220 107l-1 6M65 19l7 4M108 164l-7 3M123 93l-5 1M10 54l-4 2M70 181l-1 4M116 26l8 2M84 117l5 2M3 57l-5 6M110 24l5 6M28 185l2 8M101 120l-5 2M105 74l7 5M67 82l5 5M58 169l1 4M135 109l3 5M144 99l-4 4M175 150l4 1M200 8l-2 4M88 34l-6 3M248 0l5 3M174 159l4 7M81 88l-4 3M-3 86l6 0M88 -3l2 8M51 91l-4 4M56 36l-2 7M191 47l8 0M148 -1l-4 2M30 112l-5 5M113 65l3 2M84 38l0 8M70 66l3 3M33 112l-4 6M38 166l5 1M153 122l4 3M244 151l-6 0M186 101l0 4M143 185l-6 6M233 115l-0 4M45 150l7 2M35 26l-3 1M24 5l-0 7M117 134l4 3M23 125l6 1M70 157l7 5M13 156l5 5M206 70l7 0M103 129l3 4M162 48l-3 2M99 177l1 4M89 90l4 2M37 32l1 7M78 152l-4 0M132 62l-5 3M82 129l1 5M15 83l-2 4M158 148l-4 3M183 183l-2 6" stroke="#7cc45e" stroke-width="1.9" stroke-linecap="round" fill="none"/>
<path d="M241 25l3 3M173 46l5 3M131 146l4 3M240 66l3 3M134 176l-5 2M117 146l8 1M222 176l-1 5M234 118l7 2M101 173l7 1M244 55l3 3M211 106l-4 7M212 102l-3 6M63 10l-3 4M121 126l-3 7M243 82l4 3M32 93l-6 3M160 166l4 4M1 76l7 1M16 91l-3 3M65 63l8 3M12 88l-5 1M81 137l-2 5M228 119l8 1M229 4l5 2M80 5l8 1M106 -2l-6 4M162 159l-2 6M39 66l-4 0M219 187l-6 4M47 116l5 2M-4 102l7 4M221 -2l4 3M62 178l4 3M245 134l3 6M8 101l-3 3M111 28l8 2M191 119l1 7M100 92l-0 5M120 75l-2 4M88 12l-5 4M100 83l-4 0M60 19l5 3M203 169l1 8M43 20l-3 6M127 82l6 2M108 0l7 3M141 181l-4 1M64 155l1 7M29 73l-1 4M46 58l-2 4M118 153l2 3M93 81l7 2M133 149l2 5M22 173l-5 2M94 71l-1 6M156 96l6 5M154 162l8 2M191 4l3 3M116 148l2 4M17 171l-5 5M230 163l-4 5M177 19l-2 7M209 17l2 4M57 81l4 3M180 76l-3 7M202 138l2 3M24 173l5 5M75 60l4 4M177 158l4 0M50 169l3 8M202 170l3 6M145 75l-8 1M129 158l8 2M36 126l-0 5M45 181l3 6M207 2l1 5M-2 134l6 4M82 158l-3 3M98 1l-2 5M51 85l-5 5M205 10l5 2M34 62l3 2M17 145l-5 5M45 166l-1 5M93 -2l7 2M43 107l-3 8M244 97l-1 5M71 182l-4 5M187 12l8 0M158 165l-3 5M182 5l2 6M228 111l3 3M155 82l-1 7M244 102l5 2M226 173l-4 3M237 94l-3 7M67 68l6 5M245 157l3 4M141 30l5 5M245 37l-6 1M165 119l-7 1M152 157l-2 8M45 28l-6 5M17 5l5 3M77 152l2 6M78 27l3 6M90 64l5 2M56 9l-3 3M229 25l-1 7M132 30l-6 2M218 63l3 5M239 158l-3 4M214 47l-4 1M121 148l-5 1M92 113l-5 0M206 -2l4 2M70 3l-0 4M178 83l2 4M59 14l-6 3M171 124l1 6M39 157l6 0M97 100l-4 3M58 129l4 4M97 24l-1 4M53 40l2 8M227 155l5 1M73 181l1 5M28 88l3 2M30 153l4 4M232 93l-2 6M169 28l-1 4M22 36l-8 1M23 131l-0 6M-1 1l2 7M132 119l2 3M195 134l4 3M125 78l-2 6M162 79l-4 6M101 1l-5 1M88 121l-6 6M232 42l-3 4M235 167l-2 3M9 30l0 4M204 151l8 3M7 60l6 1M97 81l3 6M166 170l6 5M42 54l2 4M101 89l-5 1M145 96l0 6M133 172l5 4M186 144l1 8M83 73l5 6M111 43l-6 0M83 38l-5 5M253 89l-0 7M85 74l-4 6M94 35l2 3M83 167l7 2M143 112l-3 3M145 180l-2 6M68 172l3 4M177 33l-2 6M119 86l3 3M33 146l7 3M9 129l0 7M171 98l4 4M217 161l-2 7M45 61l-5 2M46 124l-5 1M4 163l-4 1M53 73l-1 4M92 90l-1 6M24 159l-4 1M203 45l-0 4M26 156l-5 1M245 188l5 1M44 62l-7 1M70 34l1 8M125 143l3 3M130 98l3 1M85 188l-5 2M126 29l8 1M171 58l-1 4M5 24l-3 5M78 85l-7 4M-1 80l5 3M119 152l-4 2M125 72l-6 1M79 44l3 7M-2 181l2 6M252 145l0 8M243 61l2 5M20 170l-3 6M74 138l-8 1M238 28l-2 4M52 176l-2 4M173 165l-8 1M145 62l-6 1M20 53l2 3M23 152l3 6M200 176l1 5M10 164l-6 1M167 95l-4 6M32 112l5 5M192 180l2 5M69 16l3 3M202 56l1 5M60 89l6 2M215 169l4 6M148 71l4 3M243 98l1 5M176 69l3 5M109 168l-7 5M92 47l6 0M56 111l-5 1M58 76l-2 6M227 88l0 5M115 115l-1 8M121 -4l2 7M83 10l7 1M212 47l-7 4M225 -3l4 4M135 56l-6 3M223 64l4 2M119 75l2 7M160 126l-0 7M51 72l-4 3M232 35l4 2M115 158l5 5M112 136l6 5M250 65l-1 7M198 180l-2 4M21 151l4 7M19 166l4 2M186 90l8 1M151 39l6 1M228 188l7 2M131 4l6 2M227 37l-8 2M144 100l-7 2M110 80l3 4M100 -4l-0 5M247 70l1 7M182 155l3 2M11 121l-2 6M108 33l1 6M250 44l5 5M180 141l3 3M145 106l-1 6M160 141l-7 4M108 122l4 6M134 162l-1 6M20 144l-6 1M248 111l6 6M209 105l2 4M81 6l-4 2M220 10l-1 6M195 181l-2 6M-1 148l3 4M28 32l-1 5M198 40l5 1M12 24l-7 3M43 129l-2 3M202 149l5 1M40 32l5 4M19 97l7 1M69 74l2 5M103 106l3 4M169 53l-1 4" stroke="#70ba52" stroke-width="2.2" stroke-linecap="round" fill="none"/>
<path d="M152 108l-5 3M153 8l2 4M111 112l-0 6M71 151l-4 1M235 183l4 3M249 157l-1 3M248 102l-5 1M50 32l5 1M123 36l6 0M205 22l2 6M18 24l-3 3M117 141l-1 8M214 17l-5 6M7 123l6 3M28 86l3 4M230 121l5 2M129 80l7 2M85 46l-3 8M27 133l-4 4M195 52l3 4M67 172l4 1M19 25l2 7M28 110l-2 6M31 91l6 5M176 83l3 2M20 123l-4 0M58 3l-4 4M199 120l2 4M230 142l0 6M144 50l-0 6M83 118l-0 7M155 126l6 2M166 154l2 7M119 149l3 7M3 -4l-4 7M163 148l3 4M179 167l6 1M92 152l-1 7M160 76l-4 3M176 111l-7 5M15 24l-7 1M247 188l8 2M17 11l0 7M211 171l3 5M243 39l4 1M132 25l4 2M37 179l3 4M25 162l-8 0M96 82l-4 4M89 10l4 3M77 134l5 3M56 70l5 5M44 66l-4 0M124 40l5 2M89 -5l-6 5M6 169l5 2M0 171l-3 6M236 91l5 3M120 10l4 2M222 123l-2 7M17 30l-2 8M66 46l3 2M138 64l4 5M54 106l-4 2M166 99l-4 5M19 150l-7 2M130 91l4 2M47 13l3 2M199 131l4 6M145 5l-5 1M171 140l-4 2M211 116l5 1M187 3l5 2M120 102l-5 5M36 123l-0 7M229 137l-3 7M32 130l-2 7M113 61l1 4M196 138l6 4M214 159l2 4M200 5l4 5M195 156l-6 6M171 138l5 5M92 135l-3 3M228 78l3 2M60 106l4 2M225 182l4 1M218 58l5 6M202 138l2 7M153 169l3 4M29 6l3 5M24 8l0 5M157 15l-2 5M23 152l4 4M59 58l-8 1M108 23l6 2M27 43l-1 6M234 113l2 5M252 128l-4 4M203 59l-1 6M19 90l6 4M60 86l-8 1M75 2l4 2M10 156l8 3M26 57l-1 4M88 129l-3 4M180 162l6 3M132 53l8 1M210 185l-4 4M105 80l-6 2M89 59l-1 6M222 186l-5 3M137 -3l2 3M153 116l-3 3M224 120l1 4M93 88l-2 3M218 6l5 1M174 27l-2 4M106 3l-6 1M109 106l-4 2M236 72l-2 4M50 125l-6 0M222 45l1 7M57 159l-5 2M234 67l2 3M146 107l1 3M153 18l-6 3M20 118l6 1M189 42l7 4M206 41l-3 1M170 158l4 5M56 130l6 3M132 130l1 4M191 7l2 5M72 91l-4 1M35 13l-0 5M1 158l5 0M42 42l1 6M236 80l-5 4M232 73l-1 6M103 165l-6 1M198 171l-5 1M40 172l4 3M62 125l6 4M199 166l5 2M213 153l5 3M86 153l-5 4M-5 13l6 3M243 63l-1 7M57 10l7 1M182 22l4 4M194 89l-4 1M127 31l6 3M133 19l4 4M218 66l-0 5M196 37l-4 3M177 152l1 4M190 107l7 2M59 169l-5 2M9 150l-7 3M117 100l-6 2M10 149l-4 7M149 88l-1 7M84 -1l-6 5M152 55l8 0M195 16l3 6M82 175l3 2M121 186l4 7M189 10l7 0M219 167l-5 4M145 139l3 3M75 45l3 1M58 55l-5 2M22 72l-4 2M200 134l5 5M81 61l-5 3M173 79l2 4M164 149l-3 7M44 141l6 3M253 174l-5 4M29 170l4 1M243 42l-6 4M51 96l4 2M246 24l5 4M97 56l-1 7M11 163l-1 4M11 68l7 2M159 77l0 4M28 5l6 2M21 63l8 1M48 75l4 5M195 41l-6 3M77 85l4 0M207 78l5 2M-0 98l5 4M28 162l-2 8M177 106l-5 1M10 138l2 4M132 126l-4 3M56 94l5 0M192 124l-5 2M149 150l-2 6M124 181l-1 7M204 103l-1 5M121 121l2 8M53 145l-2 3M95 46l-3 7M195 146l5 0M110 -4l-2 6M89 61l5 7M41 40l-2 8M8 134l4 4M96 4l-5 0M42 167l1 7M131 45l-0 6M133 151l3 6M228 42l6 4M68 58l-2 5M-2 115l-1 8M201 16l-1 8M78 87l3 3M89 52l3 2M69 14l-5 1M146 24l5 2M93 178l2 3M186 -2l-2 8M142 44l-6 3M106 16l-0 8M79 127l-2 4M20 172l-6 4M84 100l-6 5M245 44l5 3M23 110l6 1M30 165l1 6M87 47l4 1M35 122l-2 4M241 182l-4 3M139 144l4 6M255 7l-8 3M236 77l0 5M137 83l0 8M163 -3l3 6M150 43l-5 2M43 9l-4 2M103 109l-2 8M168 107l-2 5M107 176l0 4M120 148l5 4M145 115l3 2M106 11l2 6M238 88l7 1M175 184l4 4M78 130l-3 4M194 168l-5 1M187 6l-7 1M59 174l1 3M58 58l-0 5M144 124l-3 4M94 138l-5 0M251 78l-5 2M221 58l2 5" stroke="#8fd26e" stroke-width="2.2" stroke-linecap="round" fill="none"/>
<path d="M142 113l-1 6M176 41l-1 6M191 104l4 7M250 153l2 5M8 -4l4 1M63 127l1 8M6 36l-4 4M65 77l-4 1M177 186l1 5M209 130l2 6M44 47l1 3M164 131l3 7M14 12l5 5M34 154l-6 2M81 58l8 0M67 139l-1 6M-5 97l5 7M33 5l1 4M22 110l5 4M169 76l-3 3M4 105l7 1M162 54l2 4M204 73l2 3M196 47l7 1M64 98l-5 6M63 116l-2 8M241 140l-5 2M4 45l-3 4M227 138l-2 5M189 139l3 6M131 162l-1 6M215 125l1 7M119 105l-5 1M76 90l6 2M194 101l5 6M148 79l1 7M232 71l4 1M79 40l2 4M108 146l5 6M32 123l-1 5M9 131l-6 3M61 62l-6 0M206 159l-0 4M125 71l6 0M249 124l2 8M180 80l6 1M82 97l7 4M101 66l-5 2M102 9l-4 2M239 29l-4 3M173 3l-4 3M57 41l1 6M111 16l1 5M164 180l-5 4M240 116l7 1M31 146l3 3M138 172l7 4M206 135l1 5M218 41l-5 6M75 53l-1 7M2 87l-5 4M2 -1l5 5M243 37l-3 2M199 171l-2 3M85 6l6 6M155 67l1 4M82 179l7 1M95 60l4 2M206 127l-5 1M198 70l-6 6M91 131l-3 2M133 85l4 5M65 64l-2 4M87 167l6 2M53 106l-7 3M77 51l-1 6M177 44l2 4M222 149l6 2M113 137l-4 1M77 48l-8 2M64 -3l2 4M135 39l-2 6M37 149l-6 6M46 188l4 4M147 80l-1 6M92 131l0 5M18 115l5 5M100 96l-4 3M197 68l-6 1M114 116l5 1M165 7l3 2M3 143l-6 2M194 146l6 5M76 115l1 8M101 165l5 4M253 30l-0 5M20 150l6 1M54 117l-3 2M242 24l-5 2M47 114l-7 1M223 151l1 4M117 68l-7 1M94 67l-4 1M53 24l8 0M58 12l2 6M50 45l-5 5M21 73l4 5M46 95l3 5M135 47l-4 6M120 136l1 5M157 130l5 1M39 24l-4 5M227 78l-3 3M28 36l1 5M44 -5l1 5M195 115l-6 3M-2 187l-0 4M100 38l1 7M208 7l-5 2M32 113l-0 4M201 175l-4 7M46 170l5 0M7 141l-7 3M155 110l7 4M104 93l-6 4M20 94l2 5M62 140l-7 1M48 35l6 4M56 22l1 4M95 102l8 2M23 142l-3 7M218 76l6 1M78 79l4 1M146 140l-4 5M81 57l1 4M232 147l0 6M33 127l-5 3M208 32l4 3M140 64l1 5M100 41l-7 3M233 137l3 3M41 90l1 8M219 31l-1 6M189 177l-3 7M20 68l-3 6M216 105l6 3M101 160l-1 7M84 63l6 2M148 154l-1 4M54 133l6 2M139 91l3 3M106 121l6 5M236 18l3 6M17 140l2 4M214 26l-1 4M108 182l4 5M97 21l-1 4M154 155l-4 0M31 93l-4 4M20 58l1 4M14 48l-7 1M133 36l0 7M83 21l-3 4M80 81l6 3M194 8l-1 8M26 15l-4 0M120 71l6 0M92 46l6 1M208 160l5 0M203 7l-1 3M250 -2l5 4M142 138l-3 3M70 188l4 1M186 109l-4 0M232 32l2 5M133 48l2 7M68 172l-8 1M37 141l3 1M223 104l5 3M120 171l-8 0M166 45l3 6M27 166l-6 1M23 73l5 2M196 127l3 3M40 104l6 6M237 175l-6 3M11 113l4 3M232 74l6 2M69 67l-3 3M7 160l-4 5M208 52l-4 2M53 20l4 7M218 73l-5 3M35 2l4 5M-5 130l7 2M236 6l-2 8M60 3l-5 4M36 76l4 1M253 151l-0 4M7 66l7 3M3 169l-1 8M226 103l-5 5M158 70l-4 7M189 34l5 1M83 188l5 4M98 103l6 2M40 84l7 4M137 65l4 2M97 185l5 6M114 29l5 3M80 8l-4 7M239 -2l-2 3M21 105l5 5M48 126l5 1M174 187l1 5M31 91l-1 7M133 136l-4 0M125 63l4 7M102 8l-4 4M74 98l3 6M157 95l2 3M121 37l-3 1M201 44l0 4M41 146l3 6M230 125l-0 6M83 187l3 4M245 73l-8 2M153 177l-2 8M112 128l-7 1M217 150l-4 2M85 95l-2 7M175 115l5 3M238 68l3 5M89 98l4 6M140 178l-6 4M155 79l-4 1M169 26l-5 4M18 172l1 5M202 81l3 6M81 139l-3 5M213 69l1 4M212 121l5 7M197 142l4 4M122 72l-5 5M75 51l6 1M194 171l7 5M190 137l-6 2M-1 158l4 2M182 181l-7 1M124 -1l-1 4M16 155l1 5M223 155l-8 0M194 83l5 1M70 32l-5 0M-1 16l-1 4M79 173l-6 6M46 173l4 5M197 19l4 2M35 143l7 1M77 107l5 5M79 95l0 8M227 59l-1 4M96 116l-6 1M181 99l6 5M238 102l-1 7M56 172l2 4M120 155l4 2M42 23l0 5M142 123l-5 5M182 109l-6 6M139 144l-4 4M-0 24l1 4M238 30l6 1M101 170l-4 2M161 51l7 4M122 153l7 1M8 45l6 0M170 125l3 4M5 80l-5 5M175 149l-6 4M33 58l7 1M188 65l-5 4M8 72l-8 2M143 180l6 1M240 166l-2 6M239 119l-5 1M58 3l-4 6" stroke="#a4dd86" stroke-width="1.9" stroke-linecap="round" fill="none"/>
<path d="M180 51l8 3M21 83l-6 2M217 48l2 5M110 119l-4 1M210 160l-7 1M24 152l0 6M22 5l-7 1M242 126l-4 4M112 56l-6 5M140 83l-4 4M189 74l-0 6M22 168l-2 5M123 125l4 4M233 39l2 3M162 96l3 5M161 88l5 3M193 21l3 2M84 28l4 1M152 41l4 3M183 139l3 4M120 158l-6 3M245 40l-6 5M229 9l-8 2M198 116l2 5M50 44l-0 8M66 168l6 0M62 138l3 2M61 129l6 6M128 117l-1 8M60 70l4 1M184 176l5 4M175 91l1 5M124 90l8 1M32 185l-4 0M210 144l-3 5M207 107l6 6M44 130l-1 5M214 20l-7 1M148 35l-3 3M208 162l-3 4M5 183l2 3M68 82l5 4M112 -2l3 3M178 154l-8 3M137 69l3 5M150 78l-1 8M12 56l4 2M226 -2l1 7M211 51l-4 1M174 25l-7 4M161 12l7 1M24 133l-2 5M119 183l-7 3M157 179l1 6M99 88l-4 2M148 186l-4 3M35 144l-3 2M117 71l-2 5M102 58l-6 0M61 90l-5 7M140 68l-6 5M79 63l2 8M151 85l-5 3M130 154l-5 5M134 174l3 4M42 100l6 2M62 160l-0 6M170 54l2 4M187 26l5 0M151 32l-5 1M163 34l-6 3M228 126l2 7M204 127l-7 4M71 24l6 2M80 46l3 4M31 110l6 1M65 32l1 8M240 49l4 1M111 137l-5 3M32 -3l-1 4M212 134l-2 3M39 96l-1 7M55 140l-5 6M128 88l-2 4M205 111l-1 6M42 78l-3 2M145 176l3 6M205 95l-5 3M222 85l6 2M191 152l-2 4M217 118l0 5M8 109l-4 4M104 111l3 4M99 63l3 5M216 135l-2 5M0 167l0 5M111 33l-7 3M229 104l4 2M247 100l7 3M101 87l5 1M19 170l3 2M80 46l5 4M130 41l-0 8M225 157l1 8M0 39l2 5M24 51l5 4M82 74l4 8M103 27l-6 2M35 27l4 7M195 189l5 1M191 156l5 3M1 135l5 3M96 33l-4 5M160 46l7 4M192 48l-0 4M126 91l3 7M167 15l-3 5M7 30l3 8M4 89l-6 1M81 -1l4 1M209 167l-1 5M249 20l-3 4M201 100l5 2M69 160l0 7M124 70l-7 3M158 104l7 2M19 184l2 4M92 121l1 7M236 169l7 3M157 57l-2 3M87 96l8 1M191 84l4 7M104 142l-4 1M45 20l2 4M2 67l6 3M164 58l4 2M76 75l6 2M58 136l-7 2M138 101l0 4M4 75l-6 5M248 176l2 4M65 103l-1 5M218 46l8 0M234 149l5 3M77 157l-2 7M114 19l-6 1M66 34l5 2M235 74l3 8M125 77l-5 5M53 6l4 1M95 81l-6 0M13 177l2 6M74 83l-4 5M246 182l-8 1M39 174l-3 6M224 3l-6 5M181 178l-3 4M0 65l7 2M100 157l6 0M128 117l-3 4M41 94l5 6M87 -2l-3 3M245 44l5 7M204 58l-3 2M108 63l2 7M68 183l4 2M241 31l5 4M83 36l3 3M30 62l7 5M252 72l-4 4M-0 -3l-0 5M53 150l7 3M29 155l-5 1M163 68l-5 5M94 137l-8 1M75 109l-4 3M84 145l-3 5M229 97l-6 3M89 76l3 5M123 103l7 3M177 74l-4 6M227 110l-1 3M147 92l0 7M132 107l-2 4M182 111l-4 1M79 69l-3 3M219 11l-3 7M97 160l-1 6M103 91l-5 2M168 109l2 5M40 31l8 1M173 53l3 3M14 62l2 7M132 135l-3 6M197 125l-4 6M109 114l-3 4M127 139l4 3M44 8l-2 4M175 38l-8 2M106 34l3 8M36 74l-7 4M18 123l1 5M150 114l-3 7M138 79l0 4M84 58l-6 0M236 182l-1 5M169 18l4 5M21 48l-5 5M56 47l4 1M224 132l2 3M223 62l3 2M206 180l-0 7M97 50l-3 2M167 188l-6 3M63 71l-3 6M81 10l-1 7M74 82l-7 4M78 99l-6 3M9 176l-5 1M196 137l6 3M203 107l-3 4M97 38l3 3M81 108l5 0M163 16l4 5M59 167l5 3M79 1l-7 5M143 105l-6 0M179 130l3 4M115 97l-4 2M180 39l-0 4M250 98l-5 7M118 166l4 5M156 21l-4 6M142 146l1 7M177 80l-5 3M68 63l-4 3M70 125l1 8M177 95l4 3M170 69l1 4M133 132l0 4M67 84l-1 5M153 163l4 7M118 36l-7 3M63 143l4 1M162 170l3 5M130 17l1 4M30 94l-5 2M178 156l-4 2M135 -1l-7 1M109 155l-5 3M44 148l-4 7M46 162l3 4M14 156l-0 4M26 37l-5 5M211 120l8 1M68 21l-0 7M172 144l2 7M43 115l1 7M11 25l4 6M72 62l3 7M114 159l4 4M50 6l-2 7M163 32l-2 4M142 157l6 2M59 134l8 2M224 87l4 3M118 90l-5 6M249 135l-7 5M204 32l-3 7M139 53l2 7M62 178l4 4M65 87l-2 4M63 12l0 4" stroke="#64ae48" stroke-width="1.9" stroke-linecap="round" fill="none"/>
<path d="M52 49l2 7M239 112l5 2M126 135l-7 5M79 135l-1 4M184 101l0 4M167 50l3 4M229 13l-4 4M174 125l-0 5M139 134l-2 3M42 28l-4 1M110 144l-7 1M1 70l-7 4M248 15l-5 6M253 94l-4 3M253 15l-5 3M108 154l-5 2M112 80l-1 3M188 25l5 6M39 56l5 1M183 -5l-5 6M192 184l0 4M179 116l1 5M130 13l-1 6M149 107l6 4M137 163l-3 2M155 59l3 7M103 101l5 6M247 162l4 2M186 11l-4 5M100 57l-6 1M156 55l-5 6M69 158l-4 6M199 162l-5 1M49 175l5 1M230 157l-3 2M64 158l4 3M9 168l5 4M210 164l6 0M142 169l5 2M24 14l-0 4M6 173l4 6M17 48l7 3M179 67l7 5M112 60l-3 5M50 55l-3 3M71 103l0 4M108 184l4 0M156 54l-6 1M42 124l5 5M15 62l-5 0M31 -5l1 8M219 149l-1 4M147 40l-5 4M194 145l-4 3M132 61l1 7M47 141l4 5M130 83l1 4M178 149l1 6M87 125l4 0M127 169l-4 1M153 127l4 7M171 134l4 0M18 134l5 3M224 111l3 8M238 151l-2 3M68 166l-2 5M99 126l3 4M57 172l5 0M97 28l-4 1M104 61l4 1M-1 66l4 1M167 95l-8 2M221 142l6 5M54 2l5 2M128 56l0 4M230 85l7 2M162 122l7 0M226 13l5 1M234 74l7 0M60 89l-6 1M166 36l7 5M129 165l-3 6M116 9l3 4M13 23l1 7M105 -3l6 5M4 135l3 4M116 179l4 5M100 33l-5 5M204 159l-8 1M147 189l8 2M212 133l6 4M47 89l-6 0M229 64l-6 1M27 160l1 5M25 50l-4 2M109 105l-5 5M15 161l8 1M163 76l-0 5M127 26l1 7M207 51l-7 4M140 96l7 2M129 184l-0 4M108 147l3 5M206 13l-2 4M168 11l2 8M39 108l-2 4M208 48l4 0M217 16l1 7M158 124l7 0M156 138l7 3M167 53l6 0M166 174l1 7M59 94l3 5M192 55l3 3M47 108l3 5M104 51l1 4M154 14l4 1M164 54l4 5M253 61l-5 0M10 53l3 2M4 137l4 5M246 47l5 3M119 2l6 5M167 31l2 6M50 144l0 4M44 101l8 3M2 117l5 5M143 25l-2 3M116 155l-8 2M29 108l-5 7M229 182l4 4M212 22l-8 0M99 150l2 3M172 68l5 2M18 174l4 2M152 122l-2 5M115 12l4 4M166 81l-5 3M115 86l5 1M137 161l-3 2M108 185l3 4M202 31l-2 4M214 10l2 7M94 19l0 8M111 151l-0 8M7 181l-7 4M178 23l-3 2M164 63l-6 0M165 10l-3 5M240 35l1 4M246 141l-1 4M71 63l-4 4M141 168l1 5M91 153l-6 2M232 185l1 4M221 18l-5 5M70 136l2 5M3 93l-2 5M132 51l-6 1M142 31l5 2M75 17l-7 4M92 9l-4 7M14 8l3 7M215 97l1 7M196 100l-6 3M168 98l-4 0M112 75l7 2M44 138l0 8M47 59l-4 5M53 87l3 6M192 48l3 6M143 136l2 7M57 88l4 1M103 147l4 6M51 92l-2 6M13 55l-4 7M164 172l-0 7M2 160l6 5M242 124l1 6M159 40l-5 4M93 165l-6 2M133 104l-4 3M235 -4l-2 7M190 58l2 7M73 7l-6 6M126 141l6 2M57 122l-3 2M143 135l8 3M247 21l4 2M89 36l2 8M203 89l0 6M125 94l0 5M76 126l-4 3M226 3l-8 1M66 107l7 3M165 42l-6 3M98 83l1 4M27 13l1 7M153 174l7 4M119 91l5 7M125 75l4 1M251 106l3 2M245 164l3 7M41 62l-7 2M129 82l-5 6M127 103l-1 5M129 137l1 8M104 18l-3 2M161 50l-5 6M213 127l-5 0M206 149l-1 3M210 121l1 3M175 72l2 8M32 19l5 4M249 79l0 4M143 163l2 4M81 -4l-1 7M104 61l-4 4M36 184l-6 2M133 39l-0 4M229 63l5 4M252 67l-5 6M141 55l3 1M245 182l-5 1M73 74l-4 5M132 107l0 7M254 153l-4 4M194 175l6 4M196 112l-5 7M165 26l-4 2M71 29l-2 4M84 115l2 6M241 83l2 6M32 188l-7 0M184 109l4 7M169 11l6 3M189 21l4 3M252 48l-5 6M167 133l6 5M197 187l0 5M61 44l-1 5M237 155l5 2M124 171l-7 1M34 -2l1 3M42 148l-3 2M50 69l5 1M38 -1l-8 2M119 68l5 1M5 162l-1 6M6 104l3 8M171 156l5 4M85 100l6 4M10 117l-1 4M23 141l7 0M49 19l2 5M205 184l-5 7M254 78l-5 3M24 90l3 5M6 22l2 4M102 103l7 0M198 32l-1 5M227 114l-4 4M218 59l4 2M46 129l5 4M34 134l5 3M211 26l7 4M250 134l5 4M90 177l3 3M112 123l-2 4M123 26l1 7M228 87l7 1M235 33l-3 5M245 119l5 2M157 120l-5 3M148 63l-7 0M111 159l4 1M81 183l-5 4M52 154l-5 4M185 13l-7 2M124 16l-3 2M149 110l3 4M47 127l-3 4M175 75l1 7M178 20l4 3" stroke="#b0e290" stroke-width="2.2" stroke-linecap="round" fill="none"/>
<path d="M77 25l7 2M107 68l-6 1M240 120l1 7M191 137l-3 5M0 179l6 3M201 153l5 5M207 183l3 6M227 121l-0 8M183 102l-0 5M116 99l-6 1M13 161l3 5M106 5l2 6M10 155l-3 7M125 -5l-5 5M247 176l0 4M227 153l-6 2M154 20l0 8M244 44l4 2M89 72l2 3M149 156l4 1M98 149l6 3M209 30l1 4M107 31l7 1M101 46l-2 3M227 109l-2 6M181 44l8 1M179 45l1 6M155 69l-8 2M184 7l3 6M176 152l-2 8M121 17l6 2M183 83l7 5M149 129l8 2M200 157l-3 4M60 107l-7 3M66 105l-7 1M37 178l8 2M22 84l5 3M239 71l-5 3M59 75l3 6M233 107l-3 4M139 112l-2 5M31 34l4 5M1 43l5 6M195 97l-0 8M147 124l0 4M142 75l4 2M149 37l7 3M109 142l-3 3M126 31l-7 4M66 99l-3 8M43 154l2 5M170 104l-1 6M165 66l2 6M54 179l3 6M145 108l-2 3M174 53l-5 5M121 39l-4 1M36 44l2 4M177 82l-5 3M154 95l5 5M47 106l3 2M80 7l3 7M210 34l-5 2M214 46l4 1M93 151l-4 1M99 35l3 3M42 71l-7 1M158 146l5 2M52 82l1 7M15 36l-3 1M239 33l-4 3M156 147l-4 5M201 -3l3 5M16 71l-3 3M223 77l-5 3M96 17l4 5M87 91l-4 1M115 33l-0 4M87 175l5 0M126 -4l-7 3M172 22l-2 5M118 47l1 6M151 127l-5 1M153 150l4 4M3 150l-3 2M114 115l-6 5M40 121l-6 1M72 68l-8 1M176 94l-3 4M25 176l-5 2M132 187l8 3M36 81l4 2M113 179l-6 4M89 101l-3 8M57 110l5 1M134 9l4 2M240 39l-5 1M35 143l5 3M217 54l7 3M166 49l4 6M80 183l-6 0M199 22l6 2M148 185l7 4M117 163l6 3M76 89l-2 5M124 74l-3 3M246 115l-2 5M59 69l-3 4M216 46l5 2M121 183l-4 1M216 76l8 1M105 26l-2 8M230 155l5 1M164 82l-6 5M31 65l3 6M202 84l2 4M131 160l3 1M98 21l6 4M19 160l5 3M188 53l6 4M169 86l6 1M108 17l4 6M30 130l1 3M141 28l-2 5M129 110l-2 4M236 43l-2 4M128 24l-4 7M114 152l3 4M24 56l-2 3M172 123l6 1M72 173l-4 1M132 181l5 0M243 173l4 5M98 107l5 3M53 171l-8 1M66 68l-1 8M98 161l-3 5M234 71l4 1M7 3l-4 1M64 94l2 3M144 149l5 0M128 160l6 4M111 64l0 4M243 87l-8 0M245 96l-2 3M217 133l3 1M120 11l6 4M178 83l1 5M154 139l-4 2M75 65l3 7M211 146l-5 6M120 163l-7 5M190 78l2 5M217 6l-4 5M40 176l6 5M66 55l-1 4M206 39l8 3M115 70l-3 7M235 13l-2 4M82 125l-4 0M1 134l-3 6M116 88l7 2M179 180l-4 4M130 78l-3 5M190 106l-0 4M235 21l-5 2M71 135l-3 2M151 170l-5 5M178 111l1 5M237 8l-8 2M66 44l-3 7M124 18l-4 7M37 96l-3 3M224 7l-0 7M93 125l3 7M100 123l-4 0M194 132l-7 2M47 125l4 1M225 148l7 3M190 69l-3 2M236 146l-2 8M100 183l4 7M51 1l4 2M145 177l-6 6M0 148l0 8M107 132l5 5M14 170l-1 4M236 -1l3 5M73 142l3 5M161 112l-5 3M139 174l-4 7M61 104l-4 4M233 26l1 4M206 98l-5 1M152 46l-0 4M49 -2l-1 6M151 146l-3 2M147 55l6 4M51 135l2 6M24 38l0 6M229 41l3 1M219 26l4 2M118 20l-3 3M216 29l5 5M144 115l-5 3M89 17l3 6M141 -1l-2 5M189 10l4 6M192 35l5 6M93 73l-1 8M143 -3l-3 5M108 59l1 7M191 8l4 1M68 2l-6 1M240 77l-0 8M227 93l-2 5M106 186l7 3M39 18l-1 8M25 87l4 2M179 7l-4 2M200 39l-4 3M196 156l1 8M104 127l4 4M245 11l-7 3M174 180l-1 5M119 58l1 5M186 119l4 0M225 128l-3 7M60 171l-8 2M156 23l-7 2M48 181l7 1M168 131l-4 0M193 131l6 3M149 28l7 1M250 99l4 2M56 6l-4 1M209 80l0 4M95 68l3 3M128 161l-6 3M145 46l-1 4M55 60l2 7M88 121l-6 2M122 51l4 1M195 60l8 0M65 52l5 5M222 31l-1 7M233 121l3 6M105 28l6 4M249 168l-4 2M6 155l5 5M173 60l-8 1M128 119l1 5M123 16l2 7M85 80l-4 1M9 116l3 6M177 181l2 6M196 112l-0 4M80 106l-1 5M210 165l-5 1M152 -0l-6 2M119 66l-2 8M141 106l-3 2M32 122l3 2M69 84l-7 0M160 23l-1 5M160 -3l-2 6M190 14l-6 2M250 86l2 7M177 117l-1 8M54 164l3 3M149 -2l-1 4M2 23l4 4M10 139l1 3M174 80l-5 1M69 99l5 3M138 163l3 2M18 156l-2 7" stroke="#7ac85a" stroke-width="1.9" stroke-linecap="round" fill="none"/>
<path d="M108 9l1 4M32 40l-7 1M119 124l-2 3M43 186l5 2M5 108l-3 5M151 146l4 2M17 146l3 1M129 108l4 4M54 37l4 6M238 24l4 3M200 9l4 1M186 127l5 7M205 137l-6 5M60 161l-5 4M204 152l2 5M209 2l4 7M175 135l-4 2M104 65l0 4M129 118l2 7M245 117l8 3M179 109l-6 3M33 55l5 1M231 147l-4 2M200 170l-2 6M216 33l4 0M195 106l5 1M86 112l-7 4M5 184l0 8M198 26l7 2M211 96l4 2M200 167l8 1M67 55l6 2M239 174l8 2M49 131l-1 6M-2 142l0 6M245 88l-2 5M100 8l6 2M152 153l4 0M114 71l-4 1M85 118l4 2M79 119l-4 2M127 94l-4 7M188 10l2 7M117 39l5 1M228 26l1 5M55 106l-0 4M205 63l3 5M204 3l-4 2M65 48l4 4M228 13l1 4M57 -1l1 4M245 112l-3 2M230 105l8 1M82 126l7 4M122 167l-2 4M247 155l7 2M172 79l1 7M-3 137l-0 8M62 156l4 7M7 138l2 8M205 62l-1 5M165 137l3 1M6 157l4 3M154 17l6 2M4 98l5 1M232 139l-6 4M61 109l-6 2M242 39l-5 4M227 77l3 4M0 15l2 7M231 169l7 2M143 82l-7 2M65 145l-3 2M214 123l2 6M179 143l-0 7M164 108l-6 1M148 19l1 4M236 127l-6 5M215 100l-0 8M182 139l-7 0M192 -2l4 1M56 70l-8 2M245 11l-3 7M245 118l-3 6M215 10l-3 2M7 29l-3 4M89 28l8 0M201 40l-2 3M132 154l-7 1M3 125l-5 5M139 175l-6 3M124 141l-3 1M-2 121l7 3M247 134l0 4M202 107l-5 2M146 137l-6 1M38 143l-6 2M7 155l5 6M150 165l2 3M234 170l-6 1M64 184l3 3M60 23l4 2M173 45l-4 1M35 164l2 3M82 171l-7 3M127 16l-0 5M158 32l-2 3M12 68l-2 4M32 53l-1 7M48 177l5 5M33 102l7 2M157 150l-4 6M252 178l-4 3M-1 43l3 6M19 178l4 4M220 21l8 1M180 104l-3 7M139 175l-6 2M204 123l-5 2M213 50l-6 5M91 16l-0 4M191 140l-4 7M75 135l-4 4M142 29l7 3M128 23l3 4M66 41l-3 5M167 109l-4 4M171 88l-8 2M80 112l1 4M73 130l-2 4M20 16l0 5M-1 105l8 2M219 171l-1 7M133 144l-0 4M90 164l1 7M90 112l3 6M89 157l-1 3M243 71l-3 4M-0 185l-4 4M31 4l-5 5M57 52l-4 7M-4 31l5 3M154 70l4 0M14 175l-2 3M55 59l-1 4M83 -0l-1 8M131 114l-8 1M53 45l-2 3M95 68l5 2M128 2l-5 3M216 146l-6 1M82 -5l-3 7M104 51l3 5M203 156l-3 5M190 11l0 4M7 20l-8 3M123 34l1 5M106 94l-3 1M134 -3l-2 5M153 36l6 6M24 68l-7 2M155 96l-4 6M57 110l-0 4M21 101l-4 4M214 128l-0 7M55 186l-6 3M36 131l-7 3M58 88l-4 2M199 71l-4 1M103 166l-5 5M143 111l7 3M151 32l-2 3M29 177l-4 0M183 69l6 4M4 166l-4 1M101 154l6 2M213 122l-2 8M54 98l3 0M9 37l4 6M18 23l5 6M173 117l2 3M202 58l-2 3M49 101l-4 2M207 43l-1 6M218 102l-5 5M191 21l-0 8M11 169l-3 2M115 99l-8 2M244 171l3 6M111 98l7 2M189 171l6 3M243 99l4 4M245 82l-3 2M100 39l1 3M84 101l3 5M83 -2l-3 5M129 4l-7 4M226 4l0 5M107 155l-4 5M186 89l2 6M5 135l-4 2M13 23l-3 6M160 107l4 7M84 178l5 6M234 36l-4 4M189 38l-0 5M154 168l3 3M104 103l-3 3M220 124l2 3M87 123l3 3M218 18l-4 0M70 137l-4 6M43 111l-3 5M99 70l3 2M168 92l1 8M103 186l5 0M57 147l5 6M241 94l1 7M164 50l3 5M55 148l4 1M19 63l6 3M252 114l1 5M18 5l5 6M185 151l3 3M192 185l4 2M143 92l-2 7M207 23l3 3M49 80l5 4M174 161l-5 4M247 42l7 4M71 6l7 5M31 36l5 2M42 13l-4 4M93 41l-6 1M8 145l-4 7M87 177l-8 3M114 19l1 7M108 75l3 3M92 110l0 8M238 147l-0 8M137 17l-2 8M210 96l-3 2M101 48l5 5M165 62l-2 6M188 24l5 6M30 130l-3 3M134 189l4 1M44 45l1 7M17 71l7 1M211 187l6 5M124 91l1 4M20 7l-8 2M87 89l-1 4M231 145l2 4M229 0l-6 3M98 42l-6 3M113 167l2 7M6 129l-5 3M146 55l-5 2M161 82l-4 3M21 99l-7 2M238 55l4 6M131 88l1 7M247 137l3 8M193 182l-7 4M99 14l-1 4M67 167l-7 2M149 176l5 4M56 154l-5 5M50 176l8 3M18 124l4 3M198 80l-3 2M247 28l2 6M177 119l-2 5" stroke="#6cb64e" stroke-width="2.2" stroke-linecap="round" fill="none"/>
<path d="M101 182l1 3M229 113l2 0M81 64l-2 2M39 129l1 2M27 53l-4 1M247 72l-2 0M88 105l-3 3M78 98l2 2M193 23l1 1M9 42l0 2M212 176l-1 3M222 48l4 1M175 35l-3 1M36 167l2 1M73 168l1 3M177 73l-3 1M226 32l1 3M197 26l-2 2M229 176l-2 2M178 122l-2 1M39 123l2 1M105 166l2 3M111 25l1 3M195 74l-2 2M52 105l0 4M112 80l-1 1M121 185l3 2M87 27l2 3M145 38l-1 1M208 112l-2 1M239 109l4 1M102 175l1 4M65 84l-2 2M163 22l-2 3M134 159l4 0M69 117l-3 1M146 7l3 1M176 41l3 3M246 14l-0 2M100 150l-2 3M117 140l3 0M100 107l1 2M29 12l-2 1M89 167l2 2M97 131l-0 2M20 76l-3 1M219 24l-2 3M15 68l-2 0M103 2l-1 4M112 156l-1 2M166 165l2 1M207 126l-2 0M249 93l1 2M198 128l-0 2M232 160l2 1M16 58l2 2M226 112l-0 3M103 109l-1 3M167 43l-1 4M96 130l2 1M81 136l1 1M185 11l3 3M187 55l1 1M173 186l-1 3M43 129l-1 0M204 94l-1 4M134 7l-1 4M178 19l4 1M105 37l0 4M116 145l1 2M53 119l1 3M232 179l-1 3M23 108l3 2M21 121l2 1M121 100l3 2M55 77l2 3M93 9l1 1M191 93l1 1M239 136l-1 2M121 146l2 3M114 186l-1 2M159 34l-1 2M136 99l1 1M236 34l-3 1M250 23l-0 3M160 57l-1 1M181 134l-3 0M212 52l1 4M95 117l2 1M225 65l1 2M219 45l2 1M4 51l0 2M72 141l-2 1M96 84l-2 0M57 155l-4 0M19 163l1 1M62 126l-3 0M49 146l3 0M150 4l2 2M50 24l-3 2M54 24l3 1M120 171l1 2M113 142l-4 1M149 186l-2 1M177 97l1 3M181 136l-0 3M172 72l3 1M18 172l3 0M59 185l-2 0M135 56l0 2M86 172l-3 3M56 69l1 2M165 57l2 0M130 182l-4 1M193 7l1 3M136 13l2 1M190 175l-1 2M209 71l1 3M75 68l3 1M158 128l-3 2M249 17l2 2M103 88l1 3M216 157l-3 2M182 17l-3 2M229 10l-1 2M91 95l1 2M92 19l1 3M112 56l-4 1M28 101l1 2M96 186l1 2M101 175l3 0M153 106l-1 1M208 90l-3 1M162 96l-4 0M10 81l-0 2M206 6l1 1M200 104l-2 2M107 88l-0 2M10 174l-4 0M167 100l2 2M133 148l3 0M127 162l-0 2M143 75l-1 2M171 65l2 1M237 98l-0 2M175 120l3 2M26 102l-2 2M198 169l-1 1M217 102l2 2M83 108l-2 0M138 66l0 3M43 103l4 1M51 140l-2 1M10 110l-1 2M23 46l1 2M160 35l2 0M34 64l-1 2M60 145l-3 1M49 50l2 0M109 15l1 2M52 107l1 2M1 62l-2 1M176 7l2 2M88 101l0 2M163 170l-1 4M175 3l2 1M49 39l2 1M159 13l-2 1M94 122l-1 2M187 7l-1 3M100 182l-3 1M235 76l-4 0M24 72l2 1M74 1l-1 1M219 142l-2 0M37 98l-1 2M9 23l1 2M84 56l-1 2M116 42l-2 3M126 150l-0 1M201 63l-2 0M194 106l-1 3M41 44l-1 2M151 28l1 2M93 165l-3 3M59 42l2 1M137 28l-1 3M128 180l-2 0M40 145l2 3M192 83l-1 4M87 67l-2 3M132 63l-3 3M152 115l1 2M77 81l-2 3M204 16l1 2M150 71l4 1M166 1l0 2M168 151l1 2M149 11l-2 0M77 182l-2 2M190 90l3 3M53 55l-2 3M113 2l1 3M70 137l2 1M193 179l-0 2M127 125l-0 3M75 35l3 2M48 135l-2 1M125 149l-4 0M110 42l2 2M36 109l2 0M241 68l-1 3M104 136l1 1M188 147l2 1M112 59l1 2M234 30l-2 1M179 23l2 2M243 113l-1 3M82 143l-1 3M30 155l-2 2M59 152l1 3M198 69l3 2M147 66l1 3M19 69l3 1M27 162l3 0M193 114l-2 1M196 34l-2 2M220 60l-3 0M93 136l-0 3M143 37l3 2M16 115l-2 1M232 150l1 1M97 139l1 3M120 86l2 0M104 59l-2 1M7 137l0 1M65 76l-0 3M179 47l-1 2M171 34l3 0M178 149l-1 2M85 25l1 2M93 184l2 1M193 5l-1 2M169 14l-0 2M244 95l-3 2M121 28l-2 3M104 42l1 1M164 136l2 1M133 65l3 0M164 62l1 3" stroke="#2f4a24" stroke-width="1.2" stroke-linecap="round" fill="none"/>
<ellipse cx="181" cy="173" rx="3.3" ry="1.0" fill="#3d3f22" fill-opacity="0.8"/>
<ellipse cx="60" cy="112" rx="2.3" ry="1.2" fill="#3d3f22" fill-opacity="0.8"/>
<ellipse cx="9" cy="91" rx="3.7" ry="2.1" fill="#3d3f22" fill-opacity="0.8"/>
<ellipse cx="31" cy="151" rx="2.9" ry="2.4" fill="#3d3f22" fill-opacity="0.8"/>
<ellipse cx="174" cy="27" rx="3.2" ry="1.3" fill="#3d3f22" fill-opacity="0.8"/>
<ellipse cx="97" cy="10" rx="3.9" ry="1.8" fill="#3d3f22" fill-opacity="0.8"/>
<ellipse cx="123" cy="167" rx="2.0" ry="2.1" fill="#3d3f22" fill-opacity="0.8"/>
<ellipse cx="204" cy="31" rx="2.3" ry="1.3" fill="#3d3f22" fill-opacity="0.8"/>
<ellipse cx="183" cy="114" rx="3.5" ry="2.2" fill="#3d3f22" fill-opacity="0.8"/>
<ellipse cx="143" cy="107" rx="2.7" ry="1.9" fill="#3d3f22" fill-opacity="0.8"/>
<ellipse cx="59" cy="77" rx="2.7" ry="2.3" fill="#3d3f22" fill-opacity="0.8"/>
<ellipse cx="124" cy="114" rx="4.0" ry="2.0" fill="#3d3f22" fill-opacity="0.8"/>
<ellipse cx="134" cy="84" rx="2.7" ry="2.1" fill="#3d3f22" fill-opacity="0.8"/>
<ellipse cx="84" cy="152" rx="3.1" ry="2.4" fill="#3d3f22" fill-opacity="0.8"/>
<ellipse cx="112" cy="183" rx="2.2" ry="1.4" fill="#3d3f22" fill-opacity="0.8"/>
<ellipse cx="47" cy="34" rx="3.9" ry="1.7" fill="#3d3f22" fill-opacity="0.8"/>
<ellipse cx="94" cy="160" rx="2.5" ry="1.0" fill="#3d3f22" fill-opacity="0.8"/>
<ellipse cx="242" cy="115" rx="3.0" ry="1.1" fill="#3d3f22" fill-opacity="0.8"/>
<ellipse cx="3" cy="145" rx="3.8" ry="1.6" fill="#3d3f22" fill-opacity="0.8"/>
<ellipse cx="151" cy="17" rx="4.0" ry="1.6" fill="#3d3f22" fill-opacity="0.8"/>
<ellipse cx="55" cy="7" rx="2.9" ry="2.3" fill="#3d3f22" fill-opacity="0.8"/>
<ellipse cx="13" cy="142" rx="3.6" ry="1.1" fill="#3d3f22" fill-opacity="0.8"/>
<ellipse cx="238" cy="149" rx="2.2" ry="1.0" fill="#3d3f22" fill-opacity="0.8"/>
<ellipse cx="167" cy="33" rx="2.3" ry="1.4" fill="#3d3f22" fill-opacity="0.8"/>
<ellipse cx="112" cy="55" rx="3.3" ry="2.5" fill="#3d3f22" fill-opacity="0.8"/>
<ellipse cx="192" cy="157" rx="3.5" ry="1.9" fill="#3d3f22" fill-opacity="0.8"/>
<ellipse cx="168" cy="63" rx="3.5" ry="2.5" fill="#3d3f22" fill-opacity="0.8"/>
<ellipse cx="135" cy="153" rx="2.4" ry="2.1" fill="#3d3f22" fill-opacity="0.8"/>
<ellipse cx="116" cy="142" rx="3.1" ry="1.6" fill="#3d3f22" fill-opacity="0.8"/>
<ellipse cx="122" cy="55" rx="3.6" ry="1.3" fill="#3d3f22" fill-opacity="0.8"/>
<ellipse cx="45" cy="10" rx="3.8" ry="1.5" fill="#3d3f22" fill-opacity="0.8"/>
<ellipse cx="75" cy="154" rx="2.6" ry="2.3" fill="#3d3f22" fill-opacity="0.8"/>
<ellipse cx="199" cy="183" rx="2.3" ry="1.0" fill="#3d3f22" fill-opacity="0.8"/>
<ellipse cx="233" cy="127" rx="3.6" ry="1.0" fill="#3d3f22" fill-opacity="0.8"/>
<ellipse cx="54" cy="161" rx="3.6" ry="1.5" fill="#3d3f22" fill-opacity="0.8"/>
<ellipse cx="14" cy="167" rx="2.9" ry="2.4" fill="#3d3f22" fill-opacity="0.8"/>
<ellipse cx="158" cy="28" rx="2.1" ry="1.0" fill="#3d3f22" fill-opacity="0.8"/>
<ellipse cx="158" cy="54" rx="2.2" ry="2.2" fill="#3d3f22" fill-opacity="0.8"/>
<ellipse cx="18" cy="45" rx="3.0" ry="2.0" fill="#3d3f22" fill-opacity="0.8"/>
<ellipse cx="137" cy="99" rx="3.9" ry="2.4" fill="#3d3f22" fill-opacity="0.8"/>
<ellipse cx="100" cy="165" rx="2.6" ry="2.3" fill="#3d3f22" fill-opacity="0.8"/>
<ellipse cx="70" cy="91" rx="2.8" ry="2.4" fill="#3d3f22" fill-opacity="0.8"/>
<ellipse cx="113" cy="98" rx="3.5" ry="1.8" fill="#3d3f22" fill-opacity="0.8"/>
<ellipse cx="63" cy="44" rx="3.3" ry="2.2" fill="#3d3f22" fill-opacity="0.8"/>
<ellipse cx="23" cy="170" rx="2.8" ry="2.5" fill="#3d3f22" fill-opacity="0.8"/>
<rect width="250" height="187" fill="url(#gdark)"/>
<path d="M93.8 25.5L109.0 34.0L95.0 46.0z M145.2 21.8L130.0 33.0L146.5 42.0z" fill="#1c1c21"/>
<ellipse cx="120.5" cy="53" rx="26" ry="23.5" fill="#1c1c21"/>
<path d="M95.0 52.0C93.5 82.0 96.0 102.0 102.0 113.0L108.0 112.5L111.0 106.0C120.0 104.0 128.0 103.0 134.0 103.0L139.0 115.0L145.0 113.0C146.0 104.0 150.0 98.0 156.0 87.0C160.5 74.0 158.0 60.0 146.0 45.0z" fill="#1c1c21"/>
<ellipse cx="122.5" cy="61" rx="8" ry="7" fill="#232328"/>
<ellipse cx="122.69999999999999" cy="66.30000000000001" rx="2.8" ry="2" fill="#55484e"/>
<ellipse cx="110.69999999999999" cy="51" rx="2" ry="1.1" fill="#4b3a32"/>
<ellipse cx="130.3" cy="49" rx="2" ry="1.1" fill="#4b3a32"/>
<path d="M142 104l-0.6 4.3" stroke="#2a2a2f" stroke-width="0.8"/>
<path d="M132 101l0.7 4.9" stroke="#2a2a2f" stroke-width="0.8"/>
<path d="M152 96l0.2 3.8" stroke="#2a2a2f" stroke-width="0.8"/>
<path d="M131 92l0.1 4.5" stroke="#2a2a2f" stroke-width="0.8"/>
<path d="M104 96l-0.6 4.7" stroke="#2a2a2f" stroke-width="0.8"/>
<path d="M123 80l0.7 2.7" stroke="#2a2a2f" stroke-width="0.8"/>
<path d="M118 91l-1.0 4.7" stroke="#2a2a2f" stroke-width="0.8"/>
<path d="M149 78l0.0 3.1" stroke="#2a2a2f" stroke-width="0.8"/>
<path d="M139 103l0.0 4.0" stroke="#2a2a2f" stroke-width="0.8"/>
<path d="M131 94l-0.3 2.6" stroke="#2a2a2f" stroke-width="0.8"/>
<path d="M139 80l0.5 4.2" stroke="#2a2a2f" stroke-width="0.8"/>
<path d="M123 101l-0.6 2.4" stroke="#2a2a2f" stroke-width="0.8"/>
<path d="M151 81l0.2 4.9" stroke="#2a2a2f" stroke-width="0.8"/>
<path d="M135 97l0.8 4.0" stroke="#2a2a2f" stroke-width="0.8"/>
<path d="M154 100l-0.9 4.3" stroke="#2a2a2f" stroke-width="0.8"/>
<path d="M149 99l0.1 2.1" stroke="#2a2a2f" stroke-width="0.8"/>
<path d="M144 91l-0.8 4.3" stroke="#2a2a2f" stroke-width="0.8"/>
<path d="M106 87l-0.7 2.1" stroke="#2a2a2f" stroke-width="0.8"/>
<path d="M110 77l-0.1 2.1" stroke="#2a2a2f" stroke-width="0.8"/>
<path d="M101 103l-0.9 4.8" stroke="#2a2a2f" stroke-width="0.8"/>
<path d="M113 98l0.5 2.8" stroke="#2a2a2f" stroke-width="0.8"/>
<path d="M136 95l0.0 3.9" stroke="#2a2a2f" stroke-width="0.8"/>
<path d="M130 74l-0.7 4.3" stroke="#2a2a2f" stroke-width="0.8"/>
<path d="M109 79l0.7 4.3" stroke="#2a2a2f" stroke-width="0.8"/>
<path d="M126 90l0.5 4.4" stroke="#2a2a2f" stroke-width="0.8"/>
<path d="M139 96l1.0 3.4" stroke="#2a2a2f" stroke-width="0.8"/>
<path d="M112 86l0.6 3.2" stroke="#2a2a2f" stroke-width="0.8"/>
<path d="M107 101l0.2 4.0" stroke="#2a2a2f" stroke-width="0.8"/>
<path d="M109 79l-0.3 2.7" stroke="#2a2a2f" stroke-width="0.8"/>
<path d="M134 103l-0.4 2.7" stroke="#2a2a2f" stroke-width="0.8"/>
<path d="M112 100l0.5 2.1" stroke="#2a2a2f" stroke-width="0.8"/>
<path d="M147 85l0.2 4.6" stroke="#2a2a2f" stroke-width="0.8"/>
<path d="M120 90l-0.5 3.1" stroke="#2a2a2f" stroke-width="0.8"/>
<path d="M109 81l-0.5 3.4" stroke="#2a2a2f" stroke-width="0.8"/>
<path d="M119 79l0.6 2.7" stroke="#2a2a2f" stroke-width="0.8"/>
<path d="M136 91l-0.0 4.7" stroke="#2a2a2f" stroke-width="0.8"/>
<path d="M132 102l0.8 2.5" stroke="#2a2a2f" stroke-width="0.8"/>
<path d="M132 98l0.3 2.4" stroke="#2a2a2f" stroke-width="0.8"/>
<path d="M149 83l0.9 4.3" stroke="#2a2a2f" stroke-width="0.8"/>
<path d="M133 102l0.3 2.2" stroke="#2a2a2f" stroke-width="0.8"/>
<path d="M101 113l-0 3" stroke="#96d676" stroke-width="1.9" stroke-linecap="round"/>
<path d="M125 117l3 2" stroke="#64ae48" stroke-width="1.9" stroke-linecap="round"/>
<path d="M139 111l2 4" stroke="#b0e290" stroke-width="1.9" stroke-linecap="round"/>
<path d="M109 113l-5 2" stroke="#6cb64e" stroke-width="1.9" stroke-linecap="round"/>
<path d="M139 114l-2 5" stroke="#a4dd86" stroke-width="1.9" stroke-linecap="round"/>
<path d="M131 116l3 3" stroke="#b0e290" stroke-width="1.9" stroke-linecap="round"/>
<path d="M138 112l1 7" stroke="#b0e290" stroke-width="1.9" stroke-linecap="round"/>
<path d="M150 110l3 4" stroke="#7ac85a" stroke-width="1.9" stroke-linecap="round"/>
<path d="M150 114l4 3" stroke="#86cc66" stroke-width="1.9" stroke-linecap="round"/>
<path d="M100 111l0 4" stroke="#7ac85a" stroke-width="1.9" stroke-linecap="round"/>
<path d="M106 117l3 0" stroke="#8fd26e" stroke-width="1.9" stroke-linecap="round"/>
<path d="M117 108l-0 7" stroke="#64ae48" stroke-width="1.9" stroke-linecap="round"/>
<path d="M133 111l-4 1" stroke="#6cb64e" stroke-width="1.9" stroke-linecap="round"/>
<path d="M146 114l-4 1" stroke="#b0e290" stroke-width="1.9" stroke-linecap="round"/>
<circle cx="167.5" cy="87.30000000000001" r="12" fill="#cfcc1a" fill-opacity="0.78"/>
<circle cx="170.5" cy="90.30000000000001" r="6" fill="#e0dc50" fill-opacity="0.6"/>
<path d="M157.5 81.30000000000001h16M157.5 81.30000000000001l2.5-2.2M157.5 81.30000000000001l2.5 2.2M173.5 81.30000000000001l-2.5-2.2M173.5 81.30000000000001l-2.5 2.2M165.5 76.30000000000001v9" stroke="#111" stroke-width="1.3" fill="none"/>
<path d="M165.3 79l0 15.5l3.6-3.4l2.6 5.6l2.2-1l-2.5-5.4l5-0.4z" fill="#fff" stroke="#222" stroke-width="0.8"/>
</svg>
<svg class="a" style="left:457px;top:245px" width="249" height="165" viewBox="0 0 249 165">
<defs><linearGradient id="wat" x1="0" y1="0" x2="0" y2="1"><stop offset="0" stop-color="#8a8270"/><stop offset="0.4" stop-color="#827862"/><stop offset="0.75" stop-color="#7f745c"/><stop offset="1" stop-color="#8a806c"/></linearGradient><linearGradient id="trees" x1="0" y1="0" x2="1" y2="0"><stop offset="0" stop-color="#222a1e"/><stop offset="1" stop-color="#161d15"/></linearGradient></defs>
<rect width="249" height="165" fill="url(#wat)"/>
<path d="M0 18H249V46C215 44 180 40 140 38C100 36 50 37 0 38z" fill="#6f7c5b"/>
<ellipse cx="2" cy="29" rx="2.3" ry="1.2" fill="#5c6a4c"/>
<ellipse cx="237" cy="38" rx="4.5" ry="1.2" fill="#84926f"/>
<ellipse cx="238" cy="29" rx="4.5" ry="1.2" fill="#63704f"/>
<ellipse cx="11" cy="33" rx="2.0" ry="1.2" fill="#7a8964"/>
<ellipse cx="127" cy="40" rx="3.7" ry="1.2" fill="#7a8964"/>
<ellipse cx="131" cy="30" rx="2.6" ry="1.2" fill="#7a8964"/>
<ellipse cx="165" cy="38" rx="4.3" ry="1.2" fill="#63704f"/>
<ellipse cx="215" cy="27" rx="2.7" ry="1.2" fill="#63704f"/>
<ellipse cx="81" cy="38" rx="2.1" ry="1.2" fill="#5c6a4c"/>
<ellipse cx="118" cy="22" rx="4.5" ry="1.2" fill="#84926f"/>
<ellipse cx="151" cy="26" rx="4.2" ry="1.2" fill="#5c6a4c"/>
<ellipse cx="172" cy="23" rx="4.3" ry="1.2" fill="#7a8964"/>
<ellipse cx="218" cy="33" rx="2.4" ry="1.2" fill="#5c6a4c"/>
<ellipse cx="129" cy="34" rx="4.3" ry="1.2" fill="#7a8964"/>
<ellipse cx="6" cy="39" rx="4.7" ry="1.2" fill="#7a8964"/>
<ellipse cx="172" cy="36" rx="3.6" ry="1.2" fill="#7a8964"/>
<ellipse cx="211" cy="30" rx="2.2" ry="1.2" fill="#5c6a4c"/>
<ellipse cx="145" cy="26" rx="4.6" ry="1.2" fill="#5c6a4c"/>
<ellipse cx="191" cy="34" rx="5.0" ry="1.2" fill="#84926f"/>
<ellipse cx="57" cy="34" rx="4.5" ry="1.2" fill="#84926f"/>
<ellipse cx="19" cy="35" rx="2.9" ry="1.2" fill="#63704f"/>
<ellipse cx="215" cy="27" rx="4.6" ry="1.2" fill="#84926f"/>
<ellipse cx="133" cy="39" rx="5.0" ry="1.2" fill="#84926f"/>
<ellipse cx="105" cy="22" rx="4.2" ry="1.2" fill="#5c6a4c"/>
<ellipse cx="197" cy="26" rx="4.6" ry="1.2" fill="#84926f"/>
<ellipse cx="83" cy="35" rx="2.2" ry="1.2" fill="#7a8964"/>
<ellipse cx="104" cy="35" rx="3.8" ry="1.2" fill="#84926f"/>
<ellipse cx="80" cy="24" rx="4.4" ry="1.2" fill="#84926f"/>
<ellipse cx="133" cy="39" rx="4.8" ry="1.2" fill="#84926f"/>
<ellipse cx="219" cy="22" rx="3.0" ry="1.2" fill="#5c6a4c"/>
<ellipse cx="34" cy="27" rx="4.9" ry="1.2" fill="#84926f"/>
<ellipse cx="236" cy="34" rx="4.9" ry="1.2" fill="#5c6a4c"/>
<ellipse cx="139" cy="27" rx="5.0" ry="1.2" fill="#5c6a4c"/>
<ellipse cx="242" cy="29" rx="4.1" ry="1.2" fill="#5c6a4c"/>
<ellipse cx="213" cy="38" rx="3.7" ry="1.2" fill="#63704f"/>
<ellipse cx="88" cy="37" rx="3.3" ry="1.2" fill="#63704f"/>
<ellipse cx="159" cy="28" rx="3.8" ry="1.2" fill="#5c6a4c"/>
<ellipse cx="172" cy="23" rx="2.6" ry="1.2" fill="#7a8964"/>
<ellipse cx="75" cy="23" rx="4.8" ry="1.2" fill="#7a8964"/>
<ellipse cx="68" cy="30" rx="2.3" ry="1.2" fill="#84926f"/>
<ellipse cx="48" cy="30" rx="2.2" ry="1.2" fill="#5c6a4c"/>
<ellipse cx="92" cy="34" rx="5.0" ry="1.2" fill="#7a8964"/>
<ellipse cx="8" cy="27" rx="4.0" ry="1.2" fill="#63704f"/>
<ellipse cx="123" cy="34" rx="3.4" ry="1.2" fill="#7a8964"/>
<ellipse cx="71" cy="25" rx="4.6" ry="1.2" fill="#7a8964"/>
<ellipse cx="80" cy="27" rx="3.0" ry="1.2" fill="#63704f"/>
<ellipse cx="61" cy="33" rx="3.6" ry="1.2" fill="#63704f"/>
<ellipse cx="91" cy="22" rx="4.7" ry="1.2" fill="#84926f"/>
<ellipse cx="66" cy="25" rx="3.1" ry="1.2" fill="#7a8964"/>
<ellipse cx="87" cy="34" rx="4.8" ry="1.2" fill="#84926f"/>
<ellipse cx="27" cy="27" rx="3.4" ry="1.2" fill="#84926f"/>
<ellipse cx="95" cy="35" rx="4.5" ry="1.2" fill="#63704f"/>
<ellipse cx="228" cy="28" rx="3.7" ry="1.2" fill="#84926f"/>
<ellipse cx="144" cy="37" rx="2.6" ry="1.2" fill="#7a8964"/>
<ellipse cx="209" cy="30" rx="3.6" ry="1.2" fill="#84926f"/>
<ellipse cx="169" cy="25" rx="5.0" ry="1.2" fill="#7a8964"/>
<ellipse cx="97" cy="25" rx="4.3" ry="1.2" fill="#84926f"/>
<ellipse cx="37" cy="34" rx="4.7" ry="1.2" fill="#84926f"/>
<ellipse cx="74" cy="27" rx="4.7" ry="1.2" fill="#63704f"/>
<ellipse cx="15" cy="28" rx="3.1" ry="1.2" fill="#5c6a4c"/>
<ellipse cx="200" cy="30" rx="4.9" ry="1.2" fill="#63704f"/>
<ellipse cx="119" cy="40" rx="2.6" ry="1.2" fill="#7a8964"/>
<ellipse cx="83" cy="28" rx="3.5" ry="1.2" fill="#5c6a4c"/>
<ellipse cx="229" cy="31" rx="2.4" ry="1.2" fill="#63704f"/>
<ellipse cx="191" cy="32" rx="2.1" ry="1.2" fill="#84926f"/>
<ellipse cx="126" cy="38" rx="4.9" ry="1.2" fill="#84926f"/>
<ellipse cx="14" cy="31" rx="2.6" ry="1.2" fill="#5c6a4c"/>
<ellipse cx="222" cy="35" rx="2.4" ry="1.2" fill="#84926f"/>
<ellipse cx="123" cy="34" rx="3.6" ry="1.2" fill="#84926f"/>
<ellipse cx="84" cy="30" rx="3.7" ry="1.2" fill="#63704f"/>
<ellipse cx="59" cy="37" rx="2.8" ry="1.2" fill="#5c6a4c"/>
<ellipse cx="177" cy="33" rx="4.0" ry="1.2" fill="#84926f"/>
<ellipse cx="39" cy="26" rx="4.9" ry="1.2" fill="#84926f"/>
<ellipse cx="172" cy="30" rx="4.2" ry="1.2" fill="#63704f"/>
<ellipse cx="103" cy="40" rx="3.3" ry="1.2" fill="#63704f"/>
<ellipse cx="16" cy="38" rx="3.9" ry="1.2" fill="#5c6a4c"/>
<ellipse cx="186" cy="34" rx="4.7" ry="1.2" fill="#7a8964"/>
<ellipse cx="209" cy="37" rx="2.7" ry="1.2" fill="#84926f"/>
<ellipse cx="160" cy="26" rx="2.2" ry="1.2" fill="#63704f"/>
<ellipse cx="185" cy="34" rx="2.1" ry="1.2" fill="#84926f"/>
<ellipse cx="122" cy="34" rx="3.3" ry="1.2" fill="#63704f"/>
<ellipse cx="159" cy="37" rx="2.5" ry="1.2" fill="#63704f"/>
<ellipse cx="165" cy="27" rx="3.4" ry="1.2" fill="#63704f"/>
<ellipse cx="34" cy="23" rx="3.9" ry="1.2" fill="#7a8964"/>
<ellipse cx="160" cy="28" rx="4.7" ry="1.2" fill="#84926f"/>
<ellipse cx="201" cy="33" rx="2.7" ry="1.2" fill="#5c6a4c"/>
<ellipse cx="32" cy="27" rx="2.2" ry="1.2" fill="#63704f"/>
<ellipse cx="202" cy="21" rx="3.0" ry="1.2" fill="#5c6a4c"/>
<ellipse cx="114" cy="22" rx="3.7" ry="1.2" fill="#84926f"/>
<ellipse cx="243" cy="22" rx="2.6" ry="1.2" fill="#63704f"/>
<path d="M0 0H249V32C225 30 200 27 170 24C130 21 80 21 0 21z" fill="url(#trees)"/>
<circle cx="246" cy="8" r="3.1" fill="#2a3826"/>
<circle cx="110" cy="12" r="2.3" fill="#2a3826"/>
<circle cx="245" cy="9" r="2.9" fill="#243020"/>
<circle cx="53" cy="8" r="2.5" fill="#1a221a"/>
<circle cx="41" cy="15" r="2.5" fill="#243020"/>
<circle cx="131" cy="10" r="3.4" fill="#151c15"/>
<circle cx="114" cy="11" r="3.5" fill="#243020"/>
<circle cx="24" cy="5" r="2.5" fill="#2a3826"/>
<circle cx="90" cy="17" r="2.0" fill="#1a221a"/>
<circle cx="133" cy="22" r="2.3" fill="#151c15"/>
<circle cx="65" cy="6" r="2.2" fill="#2a3826"/>
<circle cx="107" cy="13" r="2.7" fill="#243020"/>
<circle cx="12" cy="12" r="2.3" fill="#243020"/>
<circle cx="136" cy="15" r="3.4" fill="#151c15"/>
<circle cx="202" cy="30" r="1.6" fill="#1a221a"/>
<circle cx="185" cy="30" r="3.3" fill="#243020"/>
<circle cx="173" cy="25" r="2.3" fill="#1a221a"/>
<circle cx="72" cy="4" r="3.2" fill="#1a221a"/>
<circle cx="1" cy="5" r="2.0" fill="#151c15"/>
<circle cx="4" cy="22" r="1.5" fill="#1a221a"/>
<circle cx="159" cy="12" r="3.4" fill="#151c15"/>
<circle cx="24" cy="13" r="1.8" fill="#151c15"/>
<circle cx="112" cy="23" r="3.0" fill="#2a3826"/>
<circle cx="238" cy="6" r="1.5" fill="#2a3826"/>
<circle cx="96" cy="16" r="1.9" fill="#151c15"/>
<circle cx="119" cy="17" r="2.9" fill="#2a3826"/>
<circle cx="6" cy="17" r="2.0" fill="#151c15"/>
<circle cx="145" cy="18" r="2.9" fill="#2a3826"/>
<circle cx="13" cy="9" r="1.5" fill="#1a221a"/>
<circle cx="139" cy="15" r="1.7" fill="#1a221a"/>
<circle cx="216" cy="13" r="2.6" fill="#1a221a"/>
<circle cx="227" cy="13" r="2.4" fill="#151c15"/>
<circle cx="21" cy="23" r="1.6" fill="#243020"/>
<circle cx="5" cy="12" r="3.0" fill="#151c15"/>
<circle cx="223" cy="21" r="2.5" fill="#151c15"/>
<circle cx="147" cy="22" r="1.7" fill="#2a3826"/>
<circle cx="110" cy="15" r="1.7" fill="#151c15"/>
<circle cx="80" cy="6" r="3.2" fill="#1a221a"/>
<circle cx="104" cy="15" r="2.4" fill="#151c15"/>
<circle cx="30" cy="10" r="2.7" fill="#243020"/>
<circle cx="224" cy="7" r="1.6" fill="#1a221a"/>
<circle cx="205" cy="9" r="1.9" fill="#1a221a"/>
<circle cx="207" cy="19" r="2.9" fill="#151c15"/>
<circle cx="95" cy="19" r="2.8" fill="#1a221a"/>
<circle cx="168" cy="23" r="3.1" fill="#151c15"/>
<circle cx="42" cy="7" r="1.9" fill="#1a221a"/>
<circle cx="17" cy="20" r="2.5" fill="#2a3826"/>
<circle cx="154" cy="8" r="2.3" fill="#1a221a"/>
<circle cx="221" cy="28" r="3.0" fill="#2a3826"/>
<circle cx="50" cy="23" r="1.6" fill="#151c15"/>
<circle cx="126" cy="19" r="2.9" fill="#1a221a"/>
<circle cx="131" cy="19" r="2.3" fill="#1a221a"/>
<circle cx="221" cy="22" r="1.9" fill="#151c15"/>
<circle cx="19" cy="10" r="1.7" fill="#151c15"/>
<circle cx="217" cy="14" r="3.3" fill="#2a3826"/>
<circle cx="93" cy="11" r="2.0" fill="#1a221a"/>
<circle cx="204" cy="6" r="2.2" fill="#1a221a"/>
<circle cx="86" cy="10" r="2.1" fill="#1a221a"/>
<circle cx="60" cy="17" r="2.0" fill="#243020"/>
<circle cx="235" cy="23" r="3.3" fill="#151c15"/>
<circle cx="20" cy="6" r="3.2" fill="#151c15"/>
<circle cx="155" cy="15" r="2.8" fill="#151c15"/>
<circle cx="166" cy="9" r="1.6" fill="#2a3826"/>
<circle cx="134" cy="23" r="2.9" fill="#1a221a"/>
<circle cx="100" cy="10" r="1.8" fill="#2a3826"/>
<circle cx="155" cy="10" r="3.0" fill="#151c15"/>
<circle cx="168" cy="24" r="2.1" fill="#1a221a"/>
<circle cx="193" cy="24" r="1.9" fill="#2a3826"/>
<circle cx="1" cy="13" r="1.7" fill="#243020"/>
<circle cx="180" cy="4" r="2.3" fill="#243020"/>
<rect x="0" y="5" width="76" height="6" fill="#1e1e1e"/><rect x="0" y="4" width="76" height="1.3" fill="#6a6a6a"/>
<rect x="27" y="11" width="4" height="11" fill="#8a8a86"/><rect x="57" y="11" width="4" height="11" fill="#8a8a86"/>
<ellipse cx="120" cy="52" rx="110" ry="4" fill="#a69e8a" fill-opacity="0.45"/>
<ellipse cx="190" cy="66" rx="60" ry="5" fill="#a8a08c" fill-opacity="0.4"/>
<ellipse cx="60" cy="75" rx="50" ry="3" fill="#9c927e" fill-opacity="0.4"/>
<ellipse cx="140" cy="100" rx="120" ry="10" fill="#7d7058" fill-opacity="0.35"/>
<ellipse cx="200" cy="128" rx="60" ry="12" fill="#a39a86" fill-opacity="0.35"/>
<ellipse cx="60" cy="160" rx="90" ry="8" fill="#978b76" fill-opacity="0.4"/>
<ellipse cx="89" cy="136" rx="6.4" ry="0.8" fill="#a29a86" fill-opacity="0.5"/>
<ellipse cx="169" cy="135" rx="10.0" ry="0.8" fill="#a29a86" fill-opacity="0.5"/>
<ellipse cx="105" cy="63" rx="5.7" ry="0.8" fill="#766a54" fill-opacity="0.5"/>
<ellipse cx="36" cy="69" rx="12.8" ry="0.8" fill="#a29a86" fill-opacity="0.5"/>
<ellipse cx="138" cy="110" rx="10.1" ry="0.8" fill="#a29a86" fill-opacity="0.5"/>
<ellipse cx="54" cy="95" rx="7.8" ry="0.8" fill="#766a54" fill-opacity="0.5"/>
<ellipse cx="58" cy="89" rx="6.5" ry="0.8" fill="#a29a86" fill-opacity="0.5"/>
<ellipse cx="25" cy="93" rx="10.8" ry="0.8" fill="#a29a86" fill-opacity="0.5"/>
<ellipse cx="192" cy="67" rx="11.2" ry="0.8" fill="#766a54" fill-opacity="0.5"/>
<ellipse cx="121" cy="61" rx="5.1" ry="0.8" fill="#766a54" fill-opacity="0.5"/>
<ellipse cx="228" cy="119" rx="5.7" ry="0.8" fill="#766a54" fill-opacity="0.5"/>
<ellipse cx="134" cy="156" rx="10.6" ry="0.8" fill="#a29a86" fill-opacity="0.5"/>
<ellipse cx="103" cy="91" rx="9.3" ry="0.8" fill="#a29a86" fill-opacity="0.5"/>
<ellipse cx="8" cy="95" rx="10.6" ry="0.8" fill="#a29a86" fill-opacity="0.5"/>
<ellipse cx="181" cy="67" rx="13.9" ry="0.8" fill="#a29a86" fill-opacity="0.5"/>
<ellipse cx="52" cy="71" rx="12.7" ry="0.8" fill="#766a54" fill-opacity="0.5"/>
<ellipse cx="213" cy="88" rx="12.1" ry="0.8" fill="#766a54" fill-opacity="0.5"/>
<ellipse cx="78" cy="98" rx="5.1" ry="0.8" fill="#a29a86" fill-opacity="0.5"/>
<ellipse cx="36" cy="96" rx="11.3" ry="0.8" fill="#766a54" fill-opacity="0.5"/>
<ellipse cx="204" cy="70" rx="12.1" ry="0.8" fill="#a29a86" fill-opacity="0.5"/>
<ellipse cx="183" cy="145" rx="5.2" ry="0.8" fill="#a29a86" fill-opacity="0.5"/>
<ellipse cx="245" cy="73" rx="9.0" ry="0.8" fill="#766a54" fill-opacity="0.5"/>
<ellipse cx="248" cy="112" rx="11.3" ry="0.8" fill="#766a54" fill-opacity="0.5"/>
<ellipse cx="161" cy="100" rx="5.2" ry="0.8" fill="#766a54" fill-opacity="0.5"/>
<ellipse cx="196" cy="151" rx="8.5" ry="0.8" fill="#766a54" fill-opacity="0.5"/>
<ellipse cx="88" cy="64" rx="13.7" ry="0.8" fill="#766a54" fill-opacity="0.5"/>
<ellipse cx="109" cy="137" rx="12.7" ry="0.8" fill="#a29a86" fill-opacity="0.5"/>
<ellipse cx="159" cy="93" rx="8.2" ry="0.8" fill="#766a54" fill-opacity="0.5"/>
<ellipse cx="72" cy="49" rx="11.1" ry="0.8" fill="#a29a86" fill-opacity="0.5"/>
<ellipse cx="106" cy="112" rx="4.6" ry="0.8" fill="#a29a86" fill-opacity="0.5"/>
<ellipse cx="171" cy="126" rx="10.3" ry="0.8" fill="#a29a86" fill-opacity="0.5"/>
<ellipse cx="169" cy="164" rx="10.0" ry="0.8" fill="#766a54" fill-opacity="0.5"/>
<ellipse cx="2" cy="63" rx="13.6" ry="0.8" fill="#766a54" fill-opacity="0.5"/>
<ellipse cx="241" cy="85" rx="10.9" ry="0.8" fill="#766a54" fill-opacity="0.5"/>
<ellipse cx="245" cy="79" rx="12.0" ry="0.8" fill="#a29a86" fill-opacity="0.5"/>
<ellipse cx="143" cy="70" rx="7.9" ry="0.8" fill="#766a54" fill-opacity="0.5"/>
<ellipse cx="140" cy="88" rx="13.7" ry="0.8" fill="#a29a86" fill-opacity="0.5"/>
<ellipse cx="177" cy="133" rx="8.0" ry="0.8" fill="#766a54" fill-opacity="0.5"/>
<ellipse cx="34" cy="145" rx="12.9" ry="0.8" fill="#766a54" fill-opacity="0.5"/>
<ellipse cx="199" cy="57" rx="9.9" ry="0.8" fill="#a29a86" fill-opacity="0.5"/>
<ellipse cx="41" cy="99" rx="10.4" ry="0.8" fill="#766a54" fill-opacity="0.5"/>
<ellipse cx="59" cy="112" rx="10.6" ry="0.8" fill="#766a54" fill-opacity="0.5"/>
<ellipse cx="3" cy="91" rx="8.9" ry="0.8" fill="#766a54" fill-opacity="0.5"/>
<ellipse cx="24" cy="98" rx="7.5" ry="0.8" fill="#766a54" fill-opacity="0.5"/>
<ellipse cx="113" cy="85" rx="8.8" ry="0.8" fill="#a29a86" fill-opacity="0.5"/>
<ellipse cx="10" cy="85" rx="6.5" ry="0.8" fill="#766a54" fill-opacity="0.5"/>
<ellipse cx="249" cy="73" rx="5.9" ry="0.8" fill="#766a54" fill-opacity="0.5"/>
<ellipse cx="170" cy="75" rx="13.5" ry="0.8" fill="#a29a86" fill-opacity="0.5"/>
<ellipse cx="144" cy="85" rx="8.0" ry="0.8" fill="#766a54" fill-opacity="0.5"/>
<ellipse cx="125" cy="152" rx="5.0" ry="0.8" fill="#a29a86" fill-opacity="0.5"/>
<path d="M218 128C224 116 238 110 249 108V152C238 152 224 146 218 140z" fill="#4d504a"/>
<path d="M234 112C240 106 246 106 249 107V118C243 116 238 115 234 114z" fill="#8d9290"/>
<path d="M214 120C219 114 226 110 232 112" stroke="#3c6a3a" stroke-width="3" fill="none"/>
<g transform="rotate(0 28.0 42.0)"><rect x="16.0" y="39.5" width="24.0" height="5.0" rx="2.5" fill="#c8b448"/><rect x="18.4" y="41.8" width="14.4" height="2.1" rx="1.0" fill="#4070c0"/><rect x="19.6" y="44.0" width="18.0" height="0.5" fill="#6a6440" fill-opacity="0.6"/></g>
<rect x="20.4" y="36.5" width="3.2" height="4" rx="0.8" fill="#e0582c"/><circle cx="22.0" cy="35.9" r="1.3" fill="#e2b03a"/>
<rect x="30.4" y="36.5" width="3.2" height="4" rx="0.8" fill="#e0582c"/><circle cx="32.0" cy="35.9" r="1.3" fill="#e2b03a"/>
<g transform="rotate(0 99.5 42.0)"><rect x="88.0" y="39.5" width="23.0" height="5.0" rx="2.5" fill="#c8b448"/><rect x="90.3" y="41.8" width="13.8" height="2.1" rx="1.0" fill="#5ab496"/><rect x="91.5" y="44.0" width="17.2" height="0.5" fill="#6a6440" fill-opacity="0.6"/></g>
<rect x="93.4" y="36.5" width="3.2" height="4" rx="0.8" fill="#e0582c"/><circle cx="95.0" cy="35.9" r="1.3" fill="#e2b03a"/>
<rect x="102.4" y="36.5" width="3.2" height="4" rx="0.8" fill="#e0582c"/><circle cx="104.0" cy="35.9" r="1.3" fill="#e2b03a"/>
<g transform="rotate(0 184.0 44.0)"><rect x="170.0" y="41.5" width="28.0" height="5.0" rx="2.5" fill="#c8b448"/><rect x="172.8" y="43.8" width="16.8" height="2.1" rx="1.0" fill="#4a78c8"/><rect x="174.2" y="46.0" width="21.0" height="0.5" fill="#6a6440" fill-opacity="0.6"/></g>
<rect x="175.4" y="38.5" width="3.2" height="4" rx="0.8" fill="#e0582c"/><circle cx="177.0" cy="37.9" r="1.3" fill="#e2b03a"/>
<rect x="187.4" y="38.5" width="3.2" height="4" rx="0.8" fill="#e0582c"/><circle cx="189.0" cy="37.9" r="1.3" fill="#e2b03a"/>
<g transform="rotate(0 120.0 51.0)"><rect x="108.0" y="48.5" width="24.0" height="5.0" rx="2.5" fill="#c8b448"/><rect x="110.4" y="50.8" width="14.4" height="2.1" rx="1.0" fill="#4a78c8"/><rect x="111.6" y="53.0" width="18.0" height="0.5" fill="#6a6440" fill-opacity="0.6"/></g>
<rect x="112.4" y="45.5" width="3.2" height="4" rx="0.8" fill="#e0582c"/><circle cx="114.0" cy="44.9" r="1.3" fill="#e2b03a"/>
<rect x="123.4" y="45.5" width="3.2" height="4" rx="0.8" fill="#e0582c"/><circle cx="125.0" cy="44.9" r="1.3" fill="#e2b03a"/>
<ellipse cx="138" cy="42" rx="7" ry="2.2" fill="#3a3a3a"/>
<g transform="rotate(0 32.0 77.0)"><rect x="9.0" y="73.0" width="46.0" height="8.0" rx="4.0" fill="#d8b848"/><rect x="13.6" y="76.6" width="27.6" height="3.4" rx="1.6" fill="#e06a48"/><rect x="15.9" y="80.2" width="34.5" height="0.8" fill="#6a6440" fill-opacity="0.6"/></g>
<path d="M13.6 75.6L14.1 70.8Q16.0 69.9 17.9 70.8L18.4 75.6z" fill="#e4552a"/><circle cx="16.0" cy="69.0" r="1.6" fill="#e3b42e"/>
<path d="M22.6 75.6L23.1 70.8Q25.0 69.9 26.9 70.8L27.4 75.6z" fill="#e4552a"/><circle cx="25.0" cy="69.0" r="1.6" fill="#e3b42e"/>
<path d="M31.6 75.6L32.1 70.8Q34.0 69.9 35.9 70.8L36.4 75.6z" fill="#e4552a"/><circle cx="34.0" cy="69.0" r="1.6" fill="#e3b42e"/>
<path d="M41.6 75.6L42.1 70.8Q44.0 69.9 45.9 70.8L46.4 75.6z" fill="#e4552a"/><circle cx="44.0" cy="69.0" r="1.6" fill="#e3b42e"/>
<g transform="rotate(0 89.0 68.0)"><rect x="77.0" y="65.0" width="24.0" height="6.0" rx="3.0" fill="#d8c048"/><rect x="79.4" y="67.7" width="14.4" height="2.5" rx="1.2" fill="#c8a838"/><rect x="80.6" y="70.4" width="18.0" height="0.6" fill="#6a6440" fill-opacity="0.6"/></g>
<path d="M82.6 66.6L83.1 61.8Q85.0 60.9 86.9 61.8L87.4 66.6z" fill="#e4552a"/><circle cx="85.0" cy="60.0" r="1.6" fill="#e3b42e"/>
<g transform="rotate(0 112.5 62.0)"><rect x="96.0" y="58.8" width="33.0" height="6.5" rx="3.2" fill="#d8a848"/><rect x="99.3" y="61.7" width="19.8" height="2.7" rx="1.3" fill="#e0604a"/><rect x="101.0" y="64.6" width="24.8" height="0.7" fill="#6a6440" fill-opacity="0.6"/></g>
<path d="M103.6 60.6L104.1 55.8Q106.0 54.9 107.9 55.8L108.4 60.6z" fill="#e4552a"/><circle cx="106.0" cy="54.0" r="1.6" fill="#e3b42e"/>
<path d="M115.6 60.6L116.1 55.8Q118.0 54.9 119.9 55.8L120.4 60.6z" fill="#e4552a"/><circle cx="118.0" cy="54.0" r="1.6" fill="#e3b42e"/>
<g transform="rotate(0 177.5 63.0)"><rect x="158.0" y="59.5" width="39.0" height="7.0" rx="3.5" fill="#d8a048"/><rect x="161.9" y="62.6" width="23.4" height="2.9" rx="1.4" fill="#e8806a"/><rect x="163.8" y="65.8" width="29.2" height="0.7" fill="#6a6440" fill-opacity="0.6"/></g>
<path d="M165.6 61.6L166.1 56.8Q168.0 55.9 169.9 56.8L170.4 61.6z" fill="#e4552a"/><circle cx="168.0" cy="55.0" r="1.6" fill="#e3b42e"/>
<path d="M178.6 61.6L179.1 56.8Q181.0 55.9 182.9 56.8L183.4 61.6z" fill="#e4552a"/><circle cx="181.0" cy="55.0" r="1.6" fill="#e3b42e"/>
<g transform="rotate(-4 57.0 131.0)"><rect x="20.0" y="124.5" width="74.0" height="13.0" rx="6.5" fill="#d9c24c"/><rect x="27.4" y="130.3" width="44.4" height="5.5" rx="2.6" fill="#5cb47e"/><rect x="31.1" y="136.2" width="55.5" height="1.3" fill="#6a6440" fill-opacity="0.6"/></g>
<path d="M25.8 126.5L26.6 118.2Q30.0 116.6 33.4 118.2L34.2 126.5z" fill="#e4552a"/><path d="M26.3 119.2l-2.5 4.2" stroke="#222" stroke-width="1.7"/><circle cx="30.0" cy="115.0" r="2.7" fill="#e3b42e"/>
<path d="M65.0 124.0L65.8 116.0Q69.0 114.5 72.2 116.0L73.0 124.0z" fill="#e4552a"/><path d="M65.5 117.0l-2.5 4.0" stroke="#222" stroke-width="1.6"/><circle cx="69.0" cy="113.0" r="2.6" fill="#e3b42e"/>
<g transform="rotate(-5 43.5 140.0)"><rect x="1.0" y="131.0" width="85.0" height="18.0" rx="9.0" fill="#d6be4a"/><rect x="9.5" y="139.1" width="51.0" height="7.6" rx="3.6" fill="#58b27a"/><rect x="13.8" y="147.2" width="63.8" height="1.8" fill="#6a6440" fill-opacity="0.6"/></g>
<path d="M45.8 135.6L46.6 127.2Q50.0 125.6 53.4 127.2L54.2 135.6z" fill="#e4552a"/><circle cx="50.0" cy="124.0" r="2.7" fill="#e3b42e"/>
<path d="M3 134l11-1v7l-11 1z" fill="#e4e4dc"/>
<g transform="rotate(-4 156.5 153.0)"><rect x="115.0" y="144.5" width="83.0" height="17.0" rx="8.5" fill="#d8bc4a"/><rect x="123.3" y="152.2" width="49.8" height="7.1" rx="3.4" fill="#52ac76"/><rect x="127.5" y="159.8" width="62.2" height="1.7" fill="#6a6440" fill-opacity="0.6"/></g>
<path d="M125.6 144.1L126.5 135.3Q130.0 133.7 133.5 135.3L134.4 144.1z" fill="#e4552a"/><path d="M126.2 136.4l-2.5 4.4" stroke="#222" stroke-width="1.8"/><circle cx="130.0" cy="132.0" r="2.9" fill="#e3b42e"/>
<path d="M161.8 144.6L162.6 136.2Q166.0 134.6 169.4 136.2L170.2 144.6z" fill="#e4552a"/><path d="M162.3 137.2l-2.5 4.2" stroke="#222" stroke-width="1.7"/><circle cx="166.0" cy="133.0" r="2.7" fill="#e3b42e"/>
<path d="M108 160L146 138" stroke="#3a3020" stroke-width="1.2"/>
<g transform="rotate(-3 216.0 145.0)"><rect x="183.0" y="138.0" width="66.0" height="14.0" rx="7.0" fill="#d8b450"/><rect x="189.6" y="144.3" width="39.6" height="5.9" rx="2.8" fill="#e68a54"/><rect x="192.9" y="150.6" width="49.5" height="1.4" fill="#6a6440" fill-opacity="0.6"/></g>
<path d="M200.4 137.7L201.3 128.4Q205.0 126.7 208.7 128.4L209.6 137.7z" fill="#e4552a"/><path d="M201.0 129.6l-2.5 4.6" stroke="#222" stroke-width="1.8"/><circle cx="205.0" cy="125.0" r="3.0" fill="#e3b42e"/>
<path d="M239.8 142.6L240.6 134.2Q244.0 132.6 247.4 134.2L248.2 142.6z" fill="#e4552a"/><path d="M240.3 135.2l-2.5 4.2" stroke="#222" stroke-width="1.7"/><circle cx="244.0" cy="131.0" r="2.7" fill="#e3b42e"/>
<path d="M190 139l10 -1v6l-10 1z" fill="#e6e4d8"/>
</svg>
<svg class="a" style="left:457px;top:435px" width="249" height="40" viewBox="0 0 249 40">
<rect width="249" height="40" fill="#12140f"/>
<rect x="61" y="7" width="1.5" height="1" fill="#4a4a44"/>
<rect x="119" y="9" width="2.3" height="1" fill="#4a4a44"/>
<rect x="163" y="5" width="1.6" height="1" fill="#4a4a44"/>
<rect x="116" y="5" width="2.0" height="1" fill="#4a4a44"/>
<rect x="75" y="4" width="2.2" height="1" fill="#4a4a44"/>
<rect x="56" y="4" width="1.2" height="1" fill="#4a4a44"/>
<rect x="137" y="3" width="1.5" height="1" fill="#4a4a44"/>
<rect x="160" y="6" width="1.9" height="1" fill="#4a4a44"/>
<rect x="86" y="6" width="2.6" height="1" fill="#4a4a44"/>
<rect x="90" y="3" width="1.4" height="1" fill="#4a4a44"/>
<rect x="138" y="6" width="2.9" height="1" fill="#4a4a44"/>
<rect x="71" y="8" width="1.8" height="1" fill="#4a4a44"/>
<rect x="79" y="8" width="1.6" height="1" fill="#4a4a44"/>
<rect x="71" y="6" width="1.9" height="1" fill="#4a4a44"/>
<rect x="52" y="10" width="1.8" height="1" fill="#4a4a44"/>
<rect x="91" y="3" width="1.3" height="1" fill="#4a4a44"/>
<rect x="66" y="3" width="2.1" height="1" fill="#4a4a44"/>
<rect x="130" y="9" width="1.5" height="1" fill="#4a4a44"/>
<rect x="153" y="8" width="1.1" height="1" fill="#4a4a44"/>
<rect x="68" y="4" width="2.7" height="1" fill="#4a4a44"/>
<rect x="145" y="3" width="1.5" height="1" fill="#4a4a44"/>
<rect x="63" y="7" width="1.9" height="1" fill="#4a4a44"/>
<rect x="172" y="9" width="1.6" height="1" fill="#4a4a44"/>
<rect x="78" y="6" width="1.8" height="1" fill="#4a4a44"/>
<rect x="151" y="4" width="2.7" height="1" fill="#4a4a44"/>
<rect x="122" y="5" width="2.9" height="1" fill="#4a4a44"/>
<rect x="89" y="8" width="2.9" height="1" fill="#4a4a44"/>
<rect x="165" y="10" width="1.9" height="1" fill="#4a4a44"/>
<rect x="148" y="9" width="1.6" height="1" fill="#4a4a44"/>
<rect x="103" y="9" width="2.6" height="1" fill="#4a4a44"/>
<rect x="83" y="8" width="1.2" height="1" fill="#4a4a44"/>
<rect x="95" y="7" width="1.6" height="1" fill="#4a4a44"/>
<rect x="41" y="7" width="2.2" height="1" fill="#4a4a44"/>
<rect x="133" y="3" width="1.1" height="1" fill="#4a4a44"/>
<rect x="46" y="6" width="1.1" height="1" fill="#4a4a44"/>
<rect x="69" y="6" width="1.8" height="1" fill="#4a4a44"/>
<rect x="136" y="3" width="2.0" height="1" fill="#4a4a44"/>
<rect x="99" y="4" width="2.8" height="1" fill="#4a4a44"/>
<rect x="171" y="10" width="1.5" height="1" fill="#4a4a44"/>
<rect x="43" y="8" width="2.8" height="1" fill="#4a4a44"/>
<rect x="89" y="4" width="2.6" height="1" fill="#4a4a44"/>
<rect x="117" y="7" width="2.4" height="1" fill="#4a4a44"/>
<rect x="113" y="9" width="2.1" height="1" fill="#4a4a44"/>
<rect x="143" y="2" width="2.0" height="1" fill="#4a4a44"/>
<rect x="167" y="6" width="2.4" height="1" fill="#4a4a44"/>
<rect x="114" y="9" width="1.2" height="1" fill="#4a4a44"/>
<rect x="80" y="3" width="2.7" height="1" fill="#4a4a44"/>
<rect x="177" y="4" width="1.6" height="1" fill="#4a4a44"/>
<rect x="75" y="7" width="2.4" height="1" fill="#4a4a44"/>
<rect x="76" y="9" width="1.9" height="1" fill="#4a4a44"/>
<rect x="110" y="5" width="1.9" height="1" fill="#4a4a44"/>
<rect x="45" y="2" width="2.9" height="1" fill="#4a4a44"/>
<rect x="80" y="5" width="3.0" height="1" fill="#4a4a44"/>
<rect x="83" y="3" width="2.7" height="1" fill="#4a4a44"/>
<rect x="96" y="7" width="1.6" height="1" fill="#4a4a44"/>
<rect x="58" y="4" width="2.5" height="1" fill="#4a4a44"/>
<rect x="116" y="7" width="2.5" height="1" fill="#4a4a44"/>
<rect x="120" y="7" width="1.4" height="1" fill="#4a4a44"/>
<rect x="66" y="5" width="2.7" height="1" fill="#4a4a44"/>
<rect x="71" y="8" width="2.7" height="1" fill="#4a4a44"/>
<rect x="143" y="3" width="1.3" height="1" fill="#4a4a44"/>
<rect x="153" y="4" width="1.0" height="1" fill="#4a4a44"/>
<rect x="122" y="8" width="2.6" height="1" fill="#4a4a44"/>
<rect x="140" y="7" width="1.7" height="1" fill="#4a4a44"/>
<rect x="170" y="4" width="1.9" height="1" fill="#4a4a44"/>
<rect x="56" y="7" width="2.4" height="1" fill="#4a4a44"/>
<rect x="112" y="5" width="1.1" height="1" fill="#4a4a44"/>
<rect x="129" y="2" width="2.5" height="1" fill="#4a4a44"/>
<rect x="126" y="9" width="2.3" height="1" fill="#4a4a44"/>
<rect x="147" y="4" width="2.9" height="1" fill="#4a4a44"/>
<rect x="122" y="6" width="1.8" height="1" fill="#4a4a44"/>
<rect x="158" y="7" width="2.1" height="1" fill="#4a4a44"/>
<rect x="126" y="8" width="3.0" height="1" fill="#4a4a44"/>
<rect x="68" y="10" width="1.6" height="1" fill="#4a4a44"/>
<rect x="101" y="8" width="2.6" height="1" fill="#4a4a44"/>
<rect x="88" y="4" width="2.1" height="1" fill="#4a4a44"/>
<rect x="107" y="5" width="1.6" height="1" fill="#4a4a44"/>
<rect x="42" y="9" width="1.7" height="1" fill="#4a4a44"/>
<rect x="168" y="7" width="1.2" height="1" fill="#4a4a44"/>
<rect x="65" y="5" width="1.4" height="1" fill="#4a4a44"/>
<rect x="55" y="8" width="2.0" height="1" fill="#4a4a44"/>
<rect x="61" y="6" width="2.4" height="1" fill="#4a4a44"/>
<rect x="157" y="5" width="1.4" height="1" fill="#4a4a44"/>
<rect x="45" y="7" width="2.1" height="1" fill="#4a4a44"/>
<rect x="179" y="4" width="1.1" height="1" fill="#4a4a44"/>
<rect x="114" y="8" width="1.5" height="1" fill="#4a4a44"/>
<rect x="79" y="4" width="2.7" height="1" fill="#4a4a44"/>
<rect x="120" y="4" width="1.7" height="1" fill="#4a4a44"/>
<rect x="76" y="2" width="2.7" height="1" fill="#4a4a44"/>
<rect x="148" y="5" width="1.7" height="1" fill="#4a4a44"/>
<rect x="0" y="28" width="249" height="12" fill="#2c2e22"/>
<rect x="232" y="30" width="2.4" height="1" fill="#4a4632"/>
<rect x="76" y="33" width="1.6" height="1" fill="#3a4a30"/>
<rect x="36" y="29" width="2.4" height="1" fill="#3a4a30"/>
<rect x="6" y="33" width="2.7" height="1" fill="#55503a"/>
<rect x="56" y="32" width="1.5" height="1" fill="#3a4a30"/>
<rect x="30" y="29" width="1.9" height="1" fill="#55503a"/>
<rect x="12" y="34" width="2.9" height="1" fill="#3a4a30"/>
<rect x="124" y="34" width="1.6" height="1" fill="#3a4a30"/>
<rect x="176" y="31" width="1.7" height="1" fill="#4a4632"/>
<rect x="56" y="32" width="1.6" height="1" fill="#3a4a30"/>
<rect x="229" y="30" width="1.2" height="1" fill="#3a4a30"/>
<rect x="90" y="33" width="1.2" height="1" fill="#4a4632"/>
<rect x="162" y="31" width="2.0" height="1" fill="#4a4632"/>
<rect x="248" y="33" width="2.1" height="1" fill="#3a4a30"/>
<rect x="153" y="33" width="1.6" height="1" fill="#55503a"/>
<rect x="125" y="34" width="2.8" height="1" fill="#4a4632"/>
<rect x="43" y="28" width="1.0" height="1" fill="#3a4a30"/>
<rect x="5" y="33" width="1.4" height="1" fill="#3a4a30"/>
<rect x="191" y="29" width="2.6" height="1" fill="#4a4632"/>
<rect x="221" y="34" width="1.6" height="1" fill="#4a4632"/>
<rect x="87" y="33" width="1.1" height="1" fill="#3a4a30"/>
<rect x="91" y="33" width="1.4" height="1" fill="#3a4a30"/>
<rect x="242" y="28" width="2.9" height="1" fill="#3a4a30"/>
<rect x="82" y="34" width="2.5" height="1" fill="#55503a"/>
<rect x="137" y="31" width="1.7" height="1" fill="#55503a"/>
<rect x="120" y="30" width="3.0" height="1" fill="#4a4632"/>
<rect x="159" y="31" width="2.8" height="1" fill="#3a4a30"/>
<rect x="221" y="28" width="2.4" height="1" fill="#55503a"/>
<rect x="190" y="34" width="2.4" height="1" fill="#55503a"/>
<rect x="165" y="32" width="2.9" height="1" fill="#55503a"/>
<rect x="43" y="31" width="1.2" height="1" fill="#55503a"/>
<rect x="107" y="35" width="1.2" height="1" fill="#3a4a30"/>
<rect x="29" y="30" width="2.3" height="1" fill="#55503a"/>
<rect x="66" y="28" width="2.8" height="1" fill="#55503a"/>
<rect x="95" y="28" width="1.9" height="1" fill="#4a4632"/>
<rect x="76" y="31" width="2.7" height="1" fill="#55503a"/>
<rect x="113" y="34" width="1.9" height="1" fill="#3a4a30"/>
<rect x="103" y="29" width="1.9" height="1" fill="#3a4a30"/>
<rect x="61" y="33" width="1.9" height="1" fill="#4a4632"/>
<rect x="164" y="34" width="2.0" height="1" fill="#55503a"/>
<rect x="179" y="32" width="1.0" height="1" fill="#4a4632"/>
<rect x="247" y="35" width="2.3" height="1" fill="#55503a"/>
<rect x="212" y="31" width="2.6" height="1" fill="#4a4632"/>
<rect x="142" y="30" width="2.2" height="1" fill="#55503a"/>
<rect x="14" y="34" width="1.0" height="1" fill="#55503a"/>
<rect x="137" y="28" width="1.1" height="1" fill="#4a4632"/>
<rect x="134" y="30" width="1.8" height="1" fill="#4a4632"/>
<rect x="65" y="32" width="1.3" height="1" fill="#55503a"/>
<rect x="162" y="31" width="2.8" height="1" fill="#55503a"/>
<rect x="231" y="32" width="3.0" height="1" fill="#4a4632"/>
<rect x="49" y="34" width="2.3" height="1" fill="#55503a"/>
<rect x="59" y="30" width="2.8" height="1" fill="#55503a"/>
<rect x="194" y="35" width="2.3" height="1" fill="#55503a"/>
<rect x="199" y="29" width="2.4" height="1" fill="#3a4a30"/>
<rect x="233" y="33" width="1.3" height="1" fill="#55503a"/>
<rect x="236" y="35" width="1.1" height="1" fill="#55503a"/>
<rect x="156" y="31" width="1.1" height="1" fill="#55503a"/>
<rect x="19" y="34" width="2.4" height="1" fill="#4a4632"/>
<rect x="20" y="35" width="2.7" height="1" fill="#55503a"/>
<rect x="218" y="29" width="2.5" height="1" fill="#3a4a30"/>
<rect x="238" y="34" width="2.3" height="1" fill="#4a4632"/>
<rect x="156" y="28" width="2.1" height="1" fill="#3a4a30"/>
<rect x="46" y="30" width="2.3" height="1" fill="#3a4a30"/>
<rect x="240" y="29" width="1.4" height="1" fill="#4a4632"/>
<rect x="32" y="28" width="1.8" height="1" fill="#55503a"/>
<rect x="55" y="34" width="2.9" height="1" fill="#55503a"/>
<rect x="4" y="34" width="1.4" height="1" fill="#55503a"/>
<rect x="113" y="31" width="2.5" height="1" fill="#3a4a30"/>
<rect x="232" y="31" width="2.3" height="1" fill="#4a4632"/>
<rect x="91" y="29" width="2.4" height="1" fill="#4a4632"/>
<rect x="21" y="32" width="1.5" height="1" fill="#55503a"/>
<rect x="35" y="32" width="1.9" height="1" fill="#55503a"/>
<rect x="170" y="34" width="1.9" height="1" fill="#3a4a30"/>
<rect x="192" y="33" width="1.1" height="1" fill="#3a4a30"/>
<rect x="28" y="31" width="1.1" height="1" fill="#3a4a30"/>
<rect x="138" y="34" width="2.2" height="1" fill="#4a4632"/>
<rect x="71" y="29" width="1.7" height="1" fill="#3a4a30"/>
<rect x="154" y="32" width="1.4" height="1" fill="#3a4a30"/>
<rect x="34" y="33" width="1.1" height="1" fill="#3a4a30"/>
<rect x="68" y="33" width="2.3" height="1" fill="#55503a"/>
<rect x="136" y="30" width="1.8" height="1" fill="#3a4a30"/>
<rect x="147" y="33" width="1.8" height="1" fill="#3a4a30"/>
<rect x="84" y="34" width="2.7" height="1" fill="#4a4632"/>
<rect x="100" y="33" width="1.7" height="1" fill="#4a4632"/>
<rect x="167" y="28" width="2.1" height="1" fill="#3a4a30"/>
<rect x="11" y="35" width="2.0" height="1" fill="#4a4632"/>
<rect x="90" y="35" width="1.7" height="1" fill="#4a4632"/>
<rect x="11" y="32" width="2.0" height="1" fill="#55503a"/>
<rect x="174" y="33" width="1.9" height="1" fill="#55503a"/>
<rect x="1" y="32" width="1.8" height="1" fill="#55503a"/>
<rect x="205" y="29" width="1.5" height="1" fill="#3a4a30"/>
<rect x="57" y="32" width="1.7" height="1" fill="#3a4a30"/>
<rect x="37" y="31" width="1.1" height="1" fill="#55503a"/>
<rect x="84" y="31" width="2.7" height="1" fill="#55503a"/>
<rect x="190" y="33" width="1.8" height="1" fill="#55503a"/>
<rect x="175" y="30" width="1.8" height="1" fill="#4a4632"/>
<rect x="144" y="32" width="2.4" height="1" fill="#3a4a30"/>
<rect x="242" y="29" width="2.3" height="1" fill="#3a4a30"/>
<rect x="245" y="31" width="2.5" height="1" fill="#4a4632"/>
<rect x="228" y="35" width="2.0" height="1" fill="#55503a"/>
<rect x="40" y="32" width="2.4" height="1" fill="#3a4a30"/>
<rect x="213" y="34" width="2.2" height="1" fill="#3a4a30"/>
<rect x="37" y="33" width="1.1" height="1" fill="#3a4a30"/>
<rect x="0" y="33" width="2.8" height="1" fill="#55503a"/>
<rect x="232" y="34" width="1.9" height="1" fill="#3a4a30"/>
<rect x="70" y="33" width="2.8" height="1" fill="#55503a"/>
<rect x="245" y="33" width="2.8" height="1" fill="#3a4a30"/>
<rect x="106" y="28" width="2.2" height="1" fill="#3a4a30"/>
<rect x="93" y="29" width="1.7" height="1" fill="#3a4a30"/>
<rect x="43" y="31" width="2.2" height="1" fill="#55503a"/>
<rect x="5" y="29" width="1.4" height="1" fill="#55503a"/>
<rect x="39" y="32" width="1.6" height="1" fill="#55503a"/>
<rect x="241" y="29" width="2.3" height="1" fill="#3a4a30"/>
<rect x="222" y="34" width="2.1" height="1" fill="#55503a"/>
<rect x="218" y="35" width="2.4" height="1" fill="#4a4632"/>
<rect x="192" y="29" width="2.1" height="1" fill="#3a4a30"/>
<rect x="212" y="33" width="2.5" height="1" fill="#55503a"/>
<rect x="129" y="34" width="3.0" height="1" fill="#55503a"/>
<rect x="155" y="34" width="1.8" height="1" fill="#4a4632"/>
<rect x="21" y="30" width="1.1" height="1" fill="#4a4632"/>
<rect x="0" y="35" width="249" height="5" fill="#5a564a"/>
<rect x="246" y="24" width="3" height="9" fill="#d8321e"/><path d="M238 37c2-3 6-4 11-4v6h-11z" fill="#8ab050"/><rect x="240" y="33" width="5" height="3" fill="#e0c040"/>
</svg>
<svg class="a" style="left:0;top:181px" width="792" height="294" viewBox="0 181 792 294">
 <rect x="92" y="248" width="250" height="187" fill="none" stroke="#9a9a9a" stroke-width="0.8"/>
 <path d="M217 226v22" stroke="#9a9a9a" stroke-width="1"/>
 <g fill="none" stroke="#8a8a8a" stroke-width="1.8">
  <path d="M210.5 220a7.3 7.3 0 1 1 13 -4.5"/>
  <circle cx="217" cy="216.5" r="3.8"/>
 </g>
 <path d="M219.5 214.5h8.5l-4.2 4.5z" fill="#8a8a8a"/>
 <g fill="#f8f8f8" stroke="#8a8a8a" stroke-width="1.3">
  <circle cx="92" cy="248" r="4.5"/><circle cx="217" cy="248" r="4.5"/><circle cx="342" cy="248" r="4.5"/>
  <circle cx="92" cy="341" r="4.5"/><circle cx="342" cy="341" r="4.5"/>
  <circle cx="92" cy="435" r="4.5"/><circle cx="217" cy="435" r="4.5"/><circle cx="342" cy="435" r="4.5"/>
 </g>
 <!-- layout options -->
 <rect x="353.5" y="248.5" width="23" height="24" fill="#f6f6f6"/>
 <path d="M353.5 248.5h23" stroke="#d9c4d0" stroke-width="1" stroke-dasharray="1 1.5"/>
 <path d="M376.5 248.5v24" stroke="#bdbdbd" stroke-width="1"/>
 <g fill="#7a93b8">
  <rect x="355.5" y="251.5" width="18" height="1.2"/><rect x="355.5" y="253.8" width="18" height="1.2"/>
  <rect x="355.5" y="258.5" width="3" height="1.2"/><rect x="371" y="258.5" width="3" height="1.2"/>
  <rect x="355.5" y="269" width="18" height="1.2"/>
 </g>
 <path d="M359.5 262a5.2 5.2 0 0 1 10.4 0" fill="none" stroke="#777" stroke-width="2.4"/>
</svg>
<!--PAGEEND-->

<!-- ruler -->
<div class="a" style="left:38px;top:154px;width:357px;height:16px;background:#f5f5f5"></div>
<div class="a" style="left:38px;top:154px;width:52px;height:16px;background:#c7c7c7"></div>
<div class="a" style="left:340px;top:154px;width:55px;height:16px;background:#c7c7c7"></div>
<div class="a" style="left:1px;top:153px;width:19px;height:18px;background:#f6f6f6;border:1px solid #d8d8d8"></div>
<svg class="a" style="left:0;top:151px" width="792" height="324" viewBox="0 151 792 324">
 <path d="M8.8 160.8v5.5h4.8" fill="none" stroke="#505050" stroke-width="1.6"/>
 <g font-family="Liberation Sans" font-size="5" fill="#6a6a6a" text-anchor="middle">
  <text x="41.1" y="164">8</text>
<text x="53.7" y="164">6</text>
<text x="66.3" y="164">4</text>
<text x="78.9" y="164">2</text>
<text x="104.1" y="164">2</text>
<text x="116.7" y="164">4</text>
<text x="129.3" y="164">6</text>
<text x="141.9" y="164">8</text>
<text x="154.5" y="164">10</text>
<text x="167.1" y="164">12</text>
<text x="179.7" y="164">14</text>
<text x="192.3" y="164">16</text>
<text x="204.9" y="164">18</text>
<text x="217.5" y="164">20</text>
<text x="230.1" y="164">22</text>
<text x="242.7" y="164">24</text>
<text x="255.3" y="164">26</text>
<text x="267.9" y="164">28</text>
<text x="280.5" y="164">30</text>
<text x="293.1" y="164">32</text>
<text x="305.7" y="164">34</text>
<text x="318.3" y="164">36</text>
<text x="330.9" y="164">38</text>
<text x="343.5" y="164">40</text>
<text x="356.1" y="164">42</text>
<text x="368.7" y="164">44</text>
<text x="381.3" y="164">46</text>
<text x="393.9" y="164">48</text>
 </g>
 <path d="M88 154.5h7.5v1.5l-3.75 5.5l-3.75-5.5z" fill="#f6f6f6" stroke="#9a9a9a" stroke-width="0.8"/>
 <path d="M91.75 163l3.75 5.5v1h-7.5v-1z" fill="#f6f6f6" stroke="#9a9a9a" stroke-width="0.8"/>
 <rect x="88" y="169.5" width="7.5" height="3.5" fill="#f6f6f6" stroke="#9a9a9a" stroke-width="0.8"/>
 <path d="M337 170l3.5-3.5l3.5 3.5z" fill="#f6f6f6" stroke="#9a9a9a" stroke-width="0.8"/>
 <!-- vertical ruler -->
 <rect x="2" y="181" width="16" height="294" fill="#f5f5f5"/>
 <rect x="2" y="181" width="16" height="44" fill="#c7c7c7"/>
 <g fill="#8a8a8a"><rect x="8" y="191.2" width="4.5" height="1"/><rect x="8" y="200.5" width="4.5" height="1"/><rect x="8" y="209.9" width="4.5" height="1"/><rect x="8" y="219.2" width="4.5" height="1"/><rect x="8" y="228.6" width="4.5" height="1"/><rect x="8" y="237.9" width="4.5" height="1"/><rect x="8" y="247.3" width="4.5" height="1"/><rect x="8" y="256.6" width="4.5" height="1"/><rect x="8" y="266.0" width="4.5" height="1"/><rect x="8" y="275.3" width="4.5" height="1"/><rect x="8" y="284.7" width="4.5" height="1"/><rect x="8" y="294.0" width="4.5" height="1"/><rect x="8" y="303.4" width="4.5" height="1"/><rect x="8" y="312.7" width="4.5" height="1"/><rect x="8" y="322.1" width="4.5" height="1"/><rect x="8" y="331.4" width="4.5" height="1"/><rect x="8" y="340.8" width="4.5" height="1"/><rect x="8" y="350.1" width="4.5" height="1"/><rect x="8" y="359.5" width="4.5" height="1"/><rect x="8" y="368.8" width="4.5" height="1"/><rect x="8" y="378.2" width="4.5" height="1"/><rect x="8" y="387.5" width="4.5" height="1"/><rect x="8" y="396.9" width="4.5" height="1"/><rect x="8" y="406.2" width="4.5" height="1"/><rect x="8" y="415.6" width="4.5" height="1"/><rect x="8" y="424.9" width="4.5" height="1"/><rect x="8" y="434.3" width="4.5" height="1"/><rect x="8" y="443.6" width="4.5" height="1"/><rect x="8" y="453.0" width="4.5" height="1"/><rect x="8" y="462.3" width="4.5" height="1"/><rect x="8" y="471.7" width="4.5" height="1"/></g>
 <g font-family="Liberation Sans" font-size="5" fill="#555" text-anchor="middle"><text transform="translate(10,187.0) rotate(-90)" y="1.8">4</text><text transform="translate(10,205.7) rotate(-90)" y="1.8">2</text><text transform="translate(10,243.1) rotate(-90)" y="1.8">2</text><text transform="translate(10,261.8) rotate(-90)" y="1.8">4</text><text transform="translate(10,280.5) rotate(-90)" y="1.8">6</text><text transform="translate(10,299.2) rotate(-90)" y="1.8">8</text><text transform="translate(10,317.9) rotate(-90)" y="1.8">10</text><text transform="translate(10,336.6) rotate(-90)" y="1.8">12</text><text transform="translate(10,355.3) rotate(-90)" y="1.8">14</text><text transform="translate(10,374.0) rotate(-90)" y="1.8">16</text><text transform="translate(10,392.7) rotate(-90)" y="1.8">18</text><text transform="translate(10,411.4) rotate(-90)" y="1.8">20</text><text transform="translate(10,430.1) rotate(-90)" y="1.8">22</text><text transform="translate(10,448.8) rotate(-90)" y="1.8">24</text><text transform="translate(10,467.5) rotate(-90)" y="1.8">26</text></g>
 <!-- scrollbar -->
 <rect x="778.5" y="153.5" width="13" height="14" fill="#f8f8f8" stroke="#d4d4d4"/>
 <path d="M781.5 162h7l-3.5-3.5z" fill="#666"/>
 <rect x="778.5" y="168.5" width="13" height="84" fill="#f8f8f8" stroke="#cdcdcd"/>
 <rect x="778.5" y="459.5" width="13" height="14.5" fill="#f8f8f8" stroke="#d4d4d4"/>
 <path d="M781.5 464.5h7l-3.5 3.5z" fill="#666"/>
</svg>


<div id="status" class="a"></div>
<div id="botline" class="a"></div>

<svg class="a" style="left:0;top:475px" width="792" height="29" viewBox="0 475 792 29">
 <rect x="563.5" y="491" width="29" height="12" fill="#cecece"/><rect x="570" y="496" width="16" height="1.2" fill="#777"/><rect x="546" y="494.5" width="9" height="1" fill="#888"/><path d="M609 494.5c1.5 1 3 1 4.5 0" stroke="#888" fill="none"/>
 <rect x="635.5" y="488.5" width="89" height="1" fill="#a0a0a0"/>
 <rect x="655" y="484.5" width="3.2" height="9.5" fill="#555"/>
 <rect x="680" y="486.5" width="1" height="5" fill="#a0a0a0"/>
 <path d="M730 489h6.5M733.25 485.75v6.5" stroke="#555" stroke-width="1.5"/>
</svg>

<div class="t" style="left:5.5px;top:483px;color:#444;font-size:11.4px">第 1 页，共 3 页</div>
<div class="t" style="left:748px;top:483.5px;color:#444;font-size:11.5px">50%</div>

<div id="caption" class="a"></div>
<div class="t cap" style="left:118px">选中图片</div><div class="t cap" style="left:224.3px">【</div><div class="t cap" style="left:246.5px">图片工具</div><div class="a" style="left:334px;top:469.5px;width:7.5px;height:3px;background:#fff"></div><div class="t cap" style="left:341.7px">格式</div><div class="t cap" style="left:386px">】</div><div class="t cap" style="left:428.2px">调整</div><div class="t cap" style="left:493.7px">压缩图片</div><div class="t cap" style="left:580.5px">。</div><svg class="a" style="left:203.7px;top:463px" width="22.3" height="14" viewBox="0 0 22.3 14"><path d="M0 6.6h20.3" stroke="#fff" stroke-width="1.8"/><path d="M15.3 2.6l4.6 4l-4.6 4" fill="none" stroke="#fff" stroke-width="1.8"/></svg><svg class="a" style="left:408px;top:463px" width="22.5" height="14" viewBox="0 0 22.5 14"><path d="M0 6.6h20.5" stroke="#fff" stroke-width="1.8"/><path d="M15.5 2.6l4.6 4l-4.6 4" fill="none" stroke="#fff" stroke-width="1.8"/></svg><svg class="a" style="left:472.7px;top:463px" width="22.7" height="14" viewBox="0 0 22.7 14"><path d="M0 6.6h20.7" stroke="#fff" stroke-width="1.8"/><path d="M15.7 2.6l4.6 4l-4.6 4" fill="none" stroke="#fff" stroke-width="1.8"/></svg>
</body></html>
